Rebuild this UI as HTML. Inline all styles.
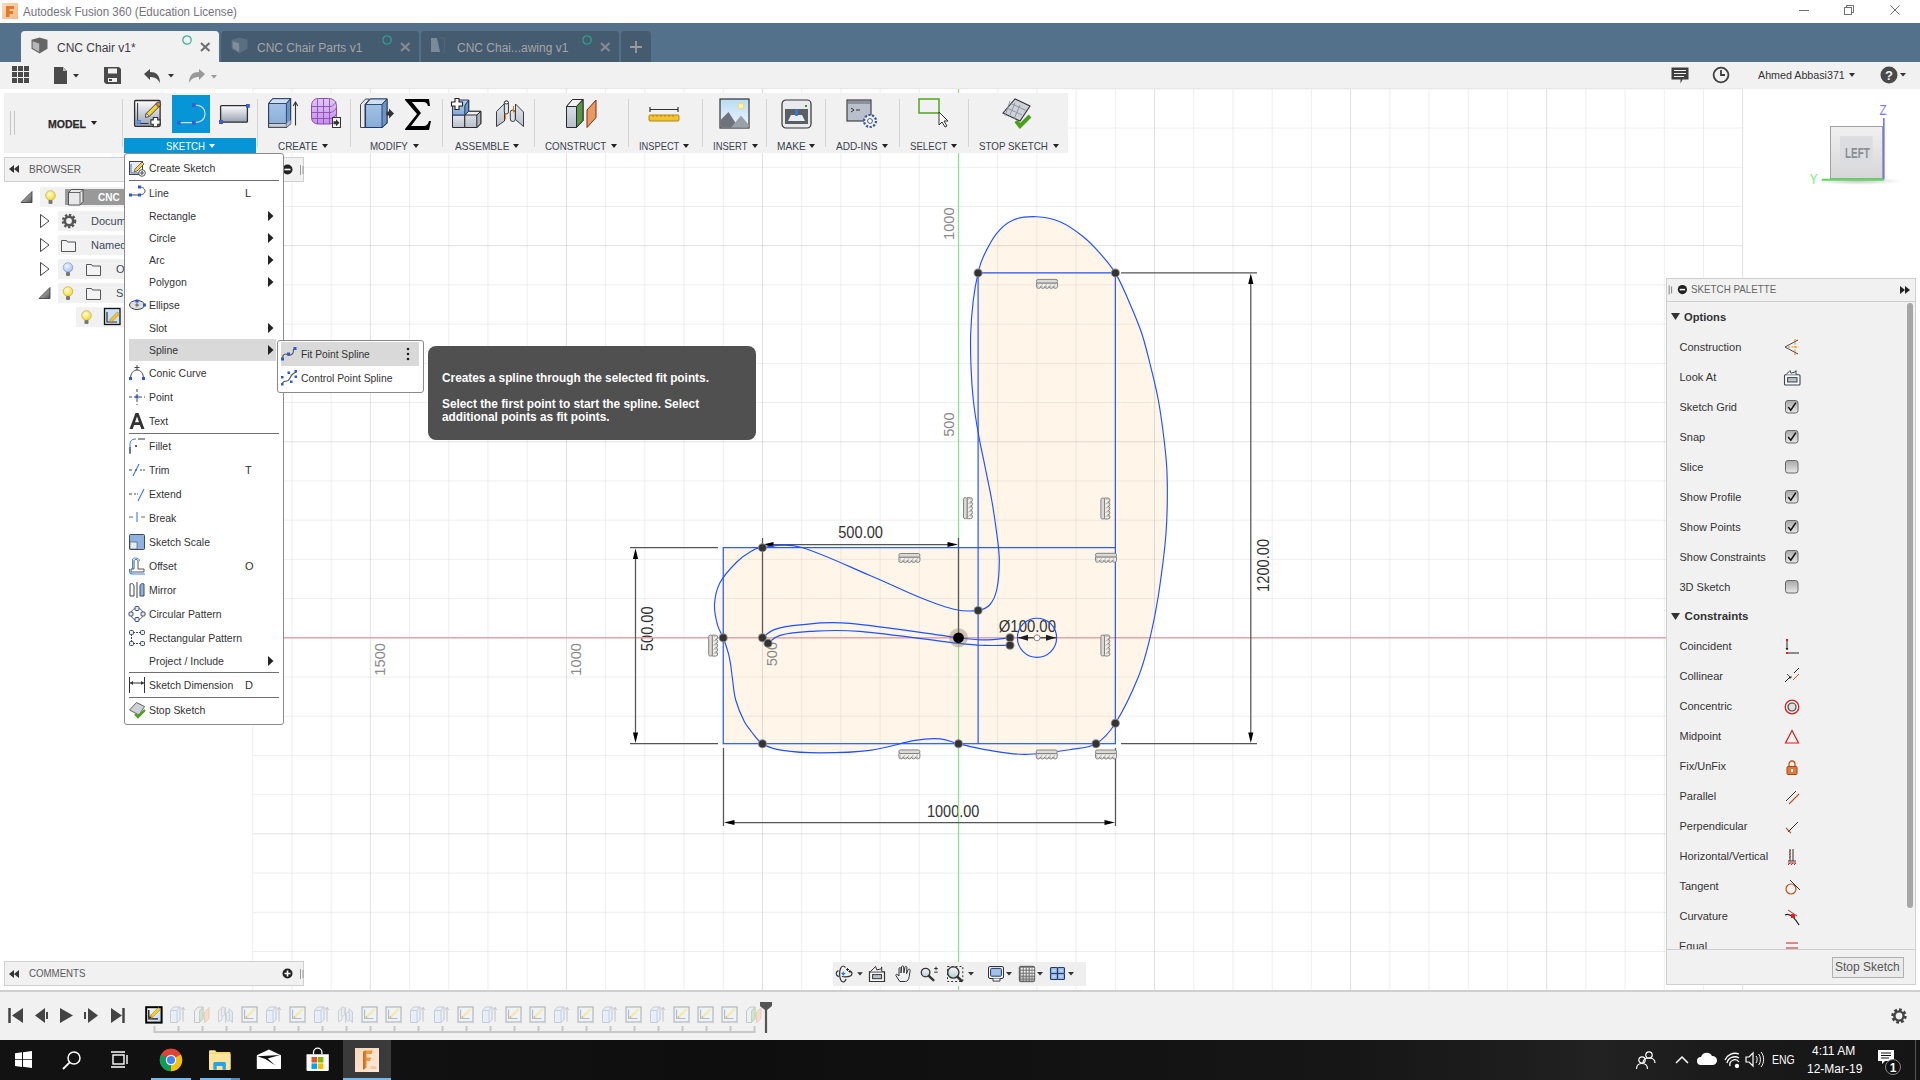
<!DOCTYPE html>
<html><head><meta charset="utf-8">
<style>
*{margin:0;padding:0;box-sizing:border-box}
html,body{width:1920px;height:1080px;overflow:hidden;background:#fff;font-family:"Liberation Sans",sans-serif;color:#3c3c3c}
.a{position:absolute}
.t{position:absolute;white-space:nowrap;line-height:1}
svg{position:absolute;overflow:visible}
</style></head><body>

<svg style="left:2px;top:3px" width="16" height="16" viewBox="0 0 16 16">
 <defs><linearGradient id="fi" x1="0" y1="0" x2="1" y2="1"><stop offset="0" stop-color="#fbd9b8"/><stop offset="1" stop-color="#f3b98a"/></linearGradient></defs>
 <rect x="0" y="0" width="16" height="16" fill="url(#fi)"/>
 <path d="M4 3h8v3H7.5v2H11v3H7.5v3H4z" fill="#e2782a"/>
</svg>
<div class="t" style="left:23.4px;top:6.14px;font-size:12px;color:#77727c;transform:scaleX(0.963);transform-origin:0 0;">Autodesk Fusion 360 (Education License)</div>
<svg style="left:1790px;top:0px" width="130" height="23" viewBox="1790 0 130 23">
 <path d="M1799 10.5h10" stroke="#707070" stroke-width="1"/>
 <rect x="1844.5" y="7.5" width="7" height="7" fill="none" stroke="#707070"/>
 <path d="M1846.5 7.5v-2h7v7h-2" fill="none" stroke="#707070"/>
 <path d="M1890.5 5.5l9 9M1899.5 5.5l-9 9" stroke="#707070" stroke-width="1"/>
</svg>
<div class="a" style="left:0;top:23px;width:1920px;height:39px;background:#53718b"></div>
<div class="a" style="left:21px;top:31px;width:198px;height:31px;background:#f1f1f1;border-radius:4px 4px 0 0"></div><svg style="left:31px;top:37px" width="17" height="16" viewBox="0 0 17 16">
<path d="M0.5 2.8l8-2.3 8 2.3v9l-8 4.7-8-4.7z" fill="#666"/>
<path d="M1.6 4.2l6.6 2.2v8.6l-6.6-3.9z" fill="#b5b6b6"/></svg><div class="t" style="left:57px;top:41.74px;font-size:12px;color:#3d3d45;">CNC Chair v1*</div><svg style="left:182px;top:35px" width="11" height="11"><circle cx="5" cy="5" r="4.2" fill="none" stroke="#3bb39c" stroke-width="1.3"/></svg><svg style="left:200px;top:42px" width="11" height="10"><path d="M1 1l8.5 8M9.5 1l-8.5 8" stroke="#707070" stroke-width="2.2"/></svg><div class="a" style="left:221px;top:31px;width:198px;height:31px;background:#455b70;border-radius:4px 4px 0 0"></div><svg style="left:231px;top:37px" width="17" height="16" viewBox="0 0 17 16">
<path d="M0.5 2.8l8-2.3 8 2.3v9l-8 4.7-8-4.7z" fill="#5b6f82"/>
<path d="M1.6 4.2l6.6 2.2v8.6l-6.6-3.9z" fill="#7e8e9c"/></svg><div class="t" style="left:257px;top:41.74px;font-size:12px;color:#a3a5a8;">CNC Chair Parts v1</div><svg style="left:382px;top:35px" width="11" height="11"><circle cx="5" cy="5" r="4.2" fill="none" stroke="#2fa08c" stroke-width="1.3"/></svg><svg style="left:400px;top:42px" width="11" height="10"><path d="M1 1l8.5 8M9.5 1l-8.5 8" stroke="#868a90" stroke-width="2.2"/></svg><div class="a" style="left:421px;top:31px;width:198px;height:31px;background:#455b70;border-radius:4px 4px 0 0"></div><svg style="left:430px;top:37px" width="16" height="16" viewBox="0 0 16 16">
<path d="M1 1h6l3 14H1z" fill="#7a8a98"/><path d="M9 1h5.5v14H12" fill="none" stroke="#536679"/></svg><div class="t" style="left:457px;top:41.74px;font-size:12px;color:#a3a5a8;">CNC Chai...awing v1</div><svg style="left:582px;top:35px" width="11" height="11"><circle cx="5" cy="5" r="4.2" fill="none" stroke="#2fa08c" stroke-width="1.3"/></svg><svg style="left:600px;top:42px" width="11" height="10"><path d="M1 1l8.5 8M9.5 1l-8.5 8" stroke="#868a90" stroke-width="2.2"/></svg><div class="a" style="left:621px;top:31px;width:30px;height:31px;background:#455b70;border-radius:4px 4px 0 0"></div>
<svg style="left:629px;top:40px" width="14" height="14"><path d="M7 1v12M1 7h12" stroke="#9a9ca0" stroke-width="1.8"/></svg>
<div class="a" style="left:0;top:62px;width:1920px;height:27px;background:#f1f1f1"></div>
<svg style="left:12px;top:66px" width="18" height="18" viewBox="0 0 18 18" fill="#4a4a4a">
<rect x="0" y="0" width="5" height="5"/><rect x="6" y="0" width="5" height="5"/><rect x="12" y="0" width="5" height="5"/>
<rect x="0" y="6" width="5" height="5"/><rect x="6" y="6" width="5" height="5"/><rect x="12" y="6" width="5" height="5"/>
<rect x="0" y="12" width="5" height="5"/><rect x="6" y="12" width="5" height="5"/><rect x="12" y="12" width="5" height="5"/></svg>
<svg style="left:54px;top:67px" width="26" height="17" viewBox="0 0 26 17">
<path d="M0 0h9l4 4v13H0z" fill="#4a4a4a"/><path d="M9 0v4h4" fill="#bbb"/><path d="M19 7h6l-3 3.5z" fill="#333"/></svg>
<svg style="left:104px;top:67px" width="17" height="17" viewBox="0 0 17 17">
<path d="M0 0h15l2 2v15H2l-2-2z" fill="#4a4a4a"/><rect x="4" y="1.5" width="9" height="5" fill="#f1f1f1"/><rect x="4" y="11" width="9" height="4" fill="#f1f1f1"/><rect x="5" y="12" width="3" height="2" fill="#4a4a4a"/></svg>
<svg style="left:144px;top:68px" width="32" height="16" viewBox="0 0 32 16">
<path d="M0 6l6-5v3c6 0 10 3 10 11-2-4-5-6-10-6v3z" fill="#4a4a4a"/><path d="M24 6h6l-3 3.5z" fill="#333"/></svg>
<svg style="left:189px;top:68px" width="30" height="16" viewBox="0 0 30 16">
<path d="M16 6l-6-5v3C4 4 0 7 0 15c2-4 5-6 10-6v3z" fill="#999"/><path d="M22 7h6l-3 3.5z" fill="#999"/></svg>
<svg style="left:1671px;top:67px" width="18" height="17" viewBox="0 0 18 17">
<path d="M0.5 0.5h17v12h-6l-2 4v-4H0.5z" fill="#3f3f3f"/><path d="M3 3.5h12M3 6.5h12M3 9.5h10" stroke="#f1f1f1" stroke-width="1.2"/></svg>
<svg style="left:1712px;top:66px" width="18" height="18" viewBox="0 0 18 18">
<circle cx="9" cy="9" r="7.4" fill="none" stroke="#3f3f3f" stroke-width="1.8"/><path d="M9 4v5h4" fill="none" stroke="#3f3f3f" stroke-width="1.8"/></svg>
<div class="t" style="left:1758px;top:69.77px;font-size:11.5px;color:#333;transform:scaleX(0.93);transform-origin:0 0;">Ahmed Abbasi371</div><svg style="left:1849px;top:73px" width="6" height="4"><path d="M0 0h6l-3.0 4z" fill="#333"/></svg>
<svg style="left:1880px;top:66px" width="28" height="18" viewBox="0 0 28 18">
<circle cx="9" cy="9" r="8.5" fill="#4a4a4a"/><text x="9" y="13.5" font-size="13" font-weight="bold" fill="#f1f1f1" text-anchor="middle" font-family="Liberation Sans">?</text>
<path d="M20 7h6l-3 3.5z" fill="#333"/></svg>
<svg style="left:0;top:0" width="1920" height="1080" viewBox="0 0 1920 1080">
<path d="M762.5 547.6C770.5 547.0 782.1 542.4 800.0 547.0C817.9 551.6 850.0 567.1 870.0 575.5C890.0 583.9 905.8 591.8 920.0 597.5C934.2 603.2 945.3 607.4 955.0 609.5C964.7 611.6 972.3 611.2 978.1 610.4C983.9 609.6 986.9 608.1 990.0 604.5C993.1 600.9 995.5 595.9 997.0 588.5C998.5 581.1 999.3 569.2 999.3 560.0C999.2 550.8 998.0 543.3 996.7 533.3C995.4 523.3 993.7 511.1 991.7 500.0C989.8 488.9 987.2 477.8 985.0 466.7C982.8 455.6 980.2 444.4 978.3 433.3C976.3 422.2 974.5 411.1 973.3 400.0C972.1 388.9 971.4 377.8 971.0 366.7C970.6 355.6 970.3 344.4 970.7 333.3C971.1 322.2 972.1 310.1 973.3 300.0C974.5 289.9 976.4 280.1 978.1 272.9C979.8 265.7 980.2 263.3 983.3 256.7C986.4 250.1 991.7 239.4 996.7 233.3C1001.7 227.2 1006.6 222.8 1013.3 220.0C1020.0 217.2 1028.9 216.4 1036.7 216.7C1044.5 217.0 1052.2 218.4 1060.0 221.7C1067.8 225.0 1076.6 231.4 1083.3 236.7C1090.0 242.0 1094.7 247.3 1100.0 253.3C1105.3 259.3 1110.6 265.1 1115.3 272.9C1120.1 280.7 1123.9 289.9 1128.3 300.0C1132.7 310.1 1138.0 322.2 1141.7 333.3C1145.4 344.4 1147.9 355.6 1150.7 366.7C1153.5 377.8 1156.2 388.9 1158.3 400.0C1160.4 411.1 1161.9 422.2 1163.3 433.3C1164.7 444.4 1166.0 455.6 1166.7 466.7C1167.4 477.8 1167.4 488.9 1167.3 500.0C1167.2 511.1 1166.7 523.3 1166.0 533.3C1165.3 543.3 1164.7 549.0 1163.3 560.0C1161.9 571.0 1160.0 586.0 1157.8 599.0C1155.6 612.0 1153.2 624.8 1150.0 637.8C1146.8 650.8 1144.2 662.5 1138.4 676.7C1132.6 691.0 1122.4 712.1 1115.3 723.3C1108.3 734.5 1103.6 739.3 1096.0 743.7C1088.4 748.1 1081.4 747.9 1069.6 749.7C1057.8 751.5 1038.3 754.3 1025.0 754.4C1011.7 754.5 1001.1 752.2 990.0 750.4C978.9 748.6 966.8 745.6 958.5 743.7C950.2 741.8 947.2 739.5 940.0 738.9C932.8 738.3 926.7 738.5 915.0 740.4C903.3 742.3 885.8 748.3 870.0 750.4C854.2 752.5 834.6 752.9 820.0 752.9C805.4 752.9 792.1 751.9 782.5 750.4C772.9 748.9 767.6 746.8 762.5 743.7C757.3 740.6 754.7 735.7 751.7 732.0C748.7 728.3 747.0 726.8 744.3 721.5C741.6 716.2 737.7 707.1 735.7 700.0C733.7 692.9 733.5 686.0 732.5 679.0C731.5 672.0 730.9 664.6 729.4 657.7C727.9 650.8 725.2 643.1 723.2 637.8C721.3 632.5 719.2 631.2 717.7 625.7C716.2 620.2 714.1 611.6 714.5 604.5C714.9 597.4 716.1 590.1 719.8 583.0C723.5 575.9 731.5 567.3 736.8 562.0C742.1 556.7 747.4 553.4 751.7 551.0C756.0 548.6 754.4 548.3 762.5 547.6Z" fill="#fff6e9"/>
<rect x="723.24" y="547.65" width="392.1" height="196.05" fill="#fff6e9"/>
<rect x="978.1" y="272.9" width="137.24" height="470.8" fill="#fff6e9"/>
</svg><svg style="left:0;top:0" width="1920" height="1080" viewBox="0 0 1920 1080">
<g font-family="Liberation Sans" fill="#333" font-size="15.6">
<text transform="translate(860.6,538) scale(0.94,1)" text-anchor="middle">500.00</text>
<text transform="translate(953.2,816.8) scale(0.93,1)" text-anchor="middle">1000.00</text>
<text transform="translate(1027.35,631.5) scale(0.955,1)" text-anchor="middle">Ø100.00</text>
<text transform="translate(652.5,628.75) rotate(-90) scale(0.94,1)" text-anchor="middle">500.00</text>
<text transform="translate(1268.9,565.4) rotate(-90) scale(0.94,1)" text-anchor="middle">1200.00</text>
</g>
<g font-family="Liberation Sans" fill="#8a8a8a" font-size="15.3">
<text transform="translate(954.3,223.7) rotate(-90) scale(0.96,1)" text-anchor="middle">1000</text>
<text transform="translate(954.3,424.6) rotate(-90) scale(0.96,1)" text-anchor="middle">500</text>
<text transform="translate(385.4,643) rotate(-90) scale(0.96,1)" text-anchor="end">1500</text>
<text transform="translate(581.1,643) rotate(-90) scale(0.96,1)" text-anchor="end">1000</text>
<text transform="translate(777.4,641.8) rotate(-90) scale(0.96,1)" text-anchor="end">500</text>
</g>
</svg><svg style="left:0;top:0" width="1920" height="1080" viewBox="0 0 1920 1080">
<path d="M252.72 89V990M291.93 89V990M331.14 89V990M409.56 89V990M448.77 89V990M487.98 89V990M527.19 89V990M605.61 89V990M644.82 89V990M684.03 89V990M723.24 89V990M801.66 89V990M840.87 89V990M880.08 89V990M919.29 89V990M997.71 89V990M1036.92 89V990M1076.13 89V990M1115.34 89V990M1193.76 89V990M1232.97 89V990M1272.18 89V990M1311.39 89V990M1389.81 89V990M1429.02 89V990M1468.23 89V990M1507.44 89V990M1585.86 89V990M1625.07 89V990M1664.28 89V990M1703.49 89V990M253 88.86H1742.5M253 128.07H1742.5M253 167.28H1742.5M253 206.49H1742.5M253 284.91H1742.5M253 324.12H1742.5M253 363.33H1742.5M253 402.54H1742.5M253 480.96H1742.5M253 520.17H1742.5M253 559.38H1742.5M253 598.59H1742.5M253 677.01H1742.5M253 716.22H1742.5M253 755.43H1742.5M253 794.64H1742.5M253 873.06H1742.5M253 912.27H1742.5M253 951.48H1742.5" stroke="rgba(0,0,0,0.065)" stroke-width="1" fill="none"/>
<path d="M370.35 89V990M566.40 89V990M762.45 89V990M958.50 89V990M1154.55 89V990M1350.60 89V990M1546.65 89V990M1742.70 89V990M253 245.70H1742.5M253 441.75H1742.5M253 637.80H1742.5M253 833.85H1742.5" stroke="rgba(0,0,0,0.12)" stroke-width="1" fill="none"/>
<path d="M958.5 89V990" stroke="#88e288" stroke-width="1.2"/>
<path d="M253 637.8H1742" stroke="#eaa5a8" stroke-width="1.4"/>
</svg><svg style="left:0;top:0" width="1920" height="1080" viewBox="0 0 1920 1080">
<g stroke="#555" stroke-width="1.25" fill="none">
<path d="M630 547.5H718M630 743.5H718M635.5 552V739"/>
<path d="M762.5 538V547M958.5 538V637M767 544.5H954"/>
<path d="M762.5 547V637"/>
<path d="M723.5 748V826M1115.5 748V826M728 822.5H1110"/>
<path d="M1121 272.9H1257M1121 743.7H1257M1250.8 278V738"/>
</g>
<g fill="#000">
<path d="M635.5 548.5l-2.6 10.5h5.2zM635.5 743l-2.6-10.5h5.2z"/>
<path d="M763 544.5l10.5-2.6v5.2zM958 544.5l-10.5-2.6v5.2z"/>
<path d="M724 822.5l10.5-2.6v5.2zM1115 822.5l-10.5-2.6v5.2z"/>
<path d="M1250.8 273.5l-2.6 10.5h5.2zM1250.8 743l-2.6-10.5h5.2z"/>
</g>
<g stroke="#1e50ff" stroke-width="1.15" fill="none">
<rect x="723.24" y="547.65" width="392.1" height="196.05"/>
<path d="M978.1 272.9V743.7M978.1 272.9H1115.34V547.65"/>
<path d="M762.5 547.6C770.5 547.0 782.1 542.4 800.0 547.0C817.9 551.6 850.0 567.1 870.0 575.5C890.0 583.9 905.8 591.8 920.0 597.5C934.2 603.2 945.3 607.4 955.0 609.5C964.7 611.6 972.3 611.2 978.1 610.4C983.9 609.6 986.9 608.1 990.0 604.5C993.1 600.9 995.5 595.9 997.0 588.5C998.5 581.1 999.3 569.2 999.3 560.0C999.2 550.8 998.0 543.3 996.7 533.3C995.4 523.3 993.7 511.1 991.7 500.0C989.8 488.9 987.2 477.8 985.0 466.7C982.8 455.6 980.2 444.4 978.3 433.3C976.3 422.2 974.5 411.1 973.3 400.0C972.1 388.9 971.4 377.8 971.0 366.7C970.6 355.6 970.3 344.4 970.7 333.3C971.1 322.2 972.1 310.1 973.3 300.0C974.5 289.9 976.4 280.1 978.1 272.9C979.8 265.7 980.2 263.3 983.3 256.7C986.4 250.1 991.7 239.4 996.7 233.3C1001.7 227.2 1006.6 222.8 1013.3 220.0C1020.0 217.2 1028.9 216.4 1036.7 216.7C1044.5 217.0 1052.2 218.4 1060.0 221.7C1067.8 225.0 1076.6 231.4 1083.3 236.7C1090.0 242.0 1094.7 247.3 1100.0 253.3C1105.3 259.3 1110.6 265.1 1115.3 272.9C1120.1 280.7 1123.9 289.9 1128.3 300.0C1132.7 310.1 1138.0 322.2 1141.7 333.3C1145.4 344.4 1147.9 355.6 1150.7 366.7C1153.5 377.8 1156.2 388.9 1158.3 400.0C1160.4 411.1 1161.9 422.2 1163.3 433.3C1164.7 444.4 1166.0 455.6 1166.7 466.7C1167.4 477.8 1167.4 488.9 1167.3 500.0C1167.2 511.1 1166.7 523.3 1166.0 533.3C1165.3 543.3 1164.7 549.0 1163.3 560.0C1161.9 571.0 1160.0 586.0 1157.8 599.0C1155.6 612.0 1153.2 624.8 1150.0 637.8C1146.8 650.8 1144.2 662.5 1138.4 676.7C1132.6 691.0 1122.4 712.1 1115.3 723.3C1108.3 734.5 1103.6 739.3 1096.0 743.7C1088.4 748.1 1081.4 747.9 1069.6 749.7C1057.8 751.5 1038.3 754.3 1025.0 754.4C1011.7 754.5 1001.1 752.2 990.0 750.4C978.9 748.6 966.8 745.6 958.5 743.7C950.2 741.8 947.2 739.5 940.0 738.9C932.8 738.3 926.7 738.5 915.0 740.4C903.3 742.3 885.8 748.3 870.0 750.4C854.2 752.5 834.6 752.9 820.0 752.9C805.4 752.9 792.1 751.9 782.5 750.4C772.9 748.9 767.6 746.8 762.5 743.7C757.3 740.6 754.7 735.7 751.7 732.0C748.7 728.3 747.0 726.8 744.3 721.5C741.6 716.2 737.7 707.1 735.7 700.0C733.7 692.9 733.5 686.0 732.5 679.0C731.5 672.0 730.9 664.6 729.4 657.7C727.9 650.8 725.2 643.1 723.2 637.8C721.3 632.5 719.2 631.2 717.7 625.7C716.2 620.2 714.1 611.6 714.5 604.5C714.9 597.4 716.1 590.1 719.8 583.0C723.5 575.9 731.5 567.3 736.8 562.0C742.1 556.7 747.4 553.4 751.7 551.0C756.0 548.6 754.4 548.3 762.5 547.6Z"/>
<path d="M762.5 637.8C764.5 636.4 768.7 631.5 775.0 629.4C781.3 627.2 787.5 625.9 800.0 624.9C812.5 623.9 823.6 621.2 850.0 623.4C876.4 625.5 936.0 635.0 958.5 637.8C981.0 640.5 976.4 639.9 985.0 639.9C993.6 639.9 1005.8 638.1 1010.0 637.8"/>
<path d="M768.0 643.3C770.0 642.0 773.0 637.4 780.0 635.4C787.0 633.4 796.7 632.1 810.0 631.4C823.3 630.7 835.2 629.4 860.0 631.4C884.8 633.4 937.7 641.1 958.5 643.4C979.3 645.7 976.4 645.1 985.0 645.4C993.6 645.7 1005.8 645.3 1010.0 645.3"/>
<circle cx="1037" cy="637.8" r="19.6"/>
</g>
<g fill="#1e1e1e"><path d="M1018 637.8l10-3v6zM1056 637.8l-10-3v6z"/></g>
<path d="M1018 637.8H1056" stroke="#1e1e1e"/>
<circle cx="1037" cy="637.8" r="3" fill="#fff" stroke="#888"/>
<g transform="translate(1036,278.9)"><path d="M0.5 4.1V7.4a2.1 2.1 0 0 0 4.2 0a2.1 2.1 0 0 0 4.2 0a2.1 2.1 0 0 0 4.2 0a2.1 2.1 0 0 0 4.2 0a2.1 2.1 0 0 0 4.2 0V4.1z" fill="#efeeeb" stroke="#858280" stroke-width="1"/><path d="M2.6 5.6a1.2 1.2 0 0 0 0 2.4M6.8 5.6a1.2 1.2 0 0 0 0 2.4M11.0 5.6a1.2 1.2 0 0 0 0 2.4M15.2 5.6a1.2 1.2 0 0 0 0 2.4M19.4 5.6a1.2 1.2 0 0 0 0 2.4" fill="none" stroke="#a8a5a0" stroke-width="0.8"/><rect x="0.5" y="0.5" width="21" height="3.6" rx="1.6" fill="#dcdad6" stroke="#858280" stroke-width="1"/></g><g transform="translate(898.4,553.0)"><path d="M0.5 4.1V7.4a2.1 2.1 0 0 0 4.2 0a2.1 2.1 0 0 0 4.2 0a2.1 2.1 0 0 0 4.2 0a2.1 2.1 0 0 0 4.2 0a2.1 2.1 0 0 0 4.2 0V4.1z" fill="#efeeeb" stroke="#858280" stroke-width="1"/><path d="M2.6 5.6a1.2 1.2 0 0 0 0 2.4M6.8 5.6a1.2 1.2 0 0 0 0 2.4M11.0 5.6a1.2 1.2 0 0 0 0 2.4M15.2 5.6a1.2 1.2 0 0 0 0 2.4M19.4 5.6a1.2 1.2 0 0 0 0 2.4" fill="none" stroke="#a8a5a0" stroke-width="0.8"/><rect x="0.5" y="0.5" width="21" height="3.6" rx="1.6" fill="#dcdad6" stroke="#858280" stroke-width="1"/></g><g transform="translate(1095,552.8000000000001)"><path d="M0.5 4.1V7.4a2.1 2.1 0 0 0 4.2 0a2.1 2.1 0 0 0 4.2 0a2.1 2.1 0 0 0 4.2 0a2.1 2.1 0 0 0 4.2 0a2.1 2.1 0 0 0 4.2 0V4.1z" fill="#efeeeb" stroke="#858280" stroke-width="1"/><path d="M2.6 5.6a1.2 1.2 0 0 0 0 2.4M6.8 5.6a1.2 1.2 0 0 0 0 2.4M11.0 5.6a1.2 1.2 0 0 0 0 2.4M15.2 5.6a1.2 1.2 0 0 0 0 2.4M19.4 5.6a1.2 1.2 0 0 0 0 2.4" fill="none" stroke="#a8a5a0" stroke-width="0.8"/><rect x="0.5" y="0.5" width="21" height="3.6" rx="1.6" fill="#dcdad6" stroke="#858280" stroke-width="1"/></g><g transform="translate(898.4,749.4000000000001)"><path d="M0.5 4.1V7.4a2.1 2.1 0 0 0 4.2 0a2.1 2.1 0 0 0 4.2 0a2.1 2.1 0 0 0 4.2 0a2.1 2.1 0 0 0 4.2 0a2.1 2.1 0 0 0 4.2 0V4.1z" fill="#efeeeb" stroke="#858280" stroke-width="1"/><path d="M2.6 5.6a1.2 1.2 0 0 0 0 2.4M6.8 5.6a1.2 1.2 0 0 0 0 2.4M11.0 5.6a1.2 1.2 0 0 0 0 2.4M15.2 5.6a1.2 1.2 0 0 0 0 2.4M19.4 5.6a1.2 1.2 0 0 0 0 2.4" fill="none" stroke="#a8a5a0" stroke-width="0.8"/><rect x="0.5" y="0.5" width="21" height="3.6" rx="1.6" fill="#dcdad6" stroke="#858280" stroke-width="1"/></g><g transform="translate(1035.7,749.5)"><path d="M0.5 4.1V7.4a2.1 2.1 0 0 0 4.2 0a2.1 2.1 0 0 0 4.2 0a2.1 2.1 0 0 0 4.2 0a2.1 2.1 0 0 0 4.2 0a2.1 2.1 0 0 0 4.2 0V4.1z" fill="#efeeeb" stroke="#858280" stroke-width="1"/><path d="M2.6 5.6a1.2 1.2 0 0 0 0 2.4M6.8 5.6a1.2 1.2 0 0 0 0 2.4M11.0 5.6a1.2 1.2 0 0 0 0 2.4M15.2 5.6a1.2 1.2 0 0 0 0 2.4M19.4 5.6a1.2 1.2 0 0 0 0 2.4" fill="none" stroke="#a8a5a0" stroke-width="0.8"/><rect x="0.5" y="0.5" width="21" height="3.6" rx="1.6" fill="#dcdad6" stroke="#858280" stroke-width="1"/></g><g transform="translate(1095,749.5)"><path d="M0.5 4.1V7.4a2.1 2.1 0 0 0 4.2 0a2.1 2.1 0 0 0 4.2 0a2.1 2.1 0 0 0 4.2 0a2.1 2.1 0 0 0 4.2 0a2.1 2.1 0 0 0 4.2 0V4.1z" fill="#efeeeb" stroke="#858280" stroke-width="1"/><path d="M2.6 5.6a1.2 1.2 0 0 0 0 2.4M6.8 5.6a1.2 1.2 0 0 0 0 2.4M11.0 5.6a1.2 1.2 0 0 0 0 2.4M15.2 5.6a1.2 1.2 0 0 0 0 2.4M19.4 5.6a1.2 1.2 0 0 0 0 2.4" fill="none" stroke="#a8a5a0" stroke-width="0.8"/><rect x="0.5" y="0.5" width="21" height="3.6" rx="1.6" fill="#dcdad6" stroke="#858280" stroke-width="1"/></g>
<g transform="translate(963.0,497.2) matrix(0,1,1,0,0,0)"><path d="M0.5 4.1V7.4a2.1 2.1 0 0 0 4.2 0a2.1 2.1 0 0 0 4.2 0a2.1 2.1 0 0 0 4.2 0a2.1 2.1 0 0 0 4.2 0a2.1 2.1 0 0 0 4.2 0V4.1z" fill="#efeeeb" stroke="#858280" stroke-width="1"/><path d="M2.6 5.6a1.2 1.2 0 0 0 0 2.4M6.8 5.6a1.2 1.2 0 0 0 0 2.4M11.0 5.6a1.2 1.2 0 0 0 0 2.4M15.2 5.6a1.2 1.2 0 0 0 0 2.4M19.4 5.6a1.2 1.2 0 0 0 0 2.4" fill="none" stroke="#a8a5a0" stroke-width="0.8"/><rect x="0.5" y="0.5" width="21" height="3.6" rx="1.6" fill="#dcdad6" stroke="#858280" stroke-width="1"/></g><g transform="translate(1100.4,497.5) matrix(0,1,1,0,0,0)"><path d="M0.5 4.1V7.4a2.1 2.1 0 0 0 4.2 0a2.1 2.1 0 0 0 4.2 0a2.1 2.1 0 0 0 4.2 0a2.1 2.1 0 0 0 4.2 0a2.1 2.1 0 0 0 4.2 0V4.1z" fill="#efeeeb" stroke="#858280" stroke-width="1"/><path d="M2.6 5.6a1.2 1.2 0 0 0 0 2.4M6.8 5.6a1.2 1.2 0 0 0 0 2.4M11.0 5.6a1.2 1.2 0 0 0 0 2.4M15.2 5.6a1.2 1.2 0 0 0 0 2.4M19.4 5.6a1.2 1.2 0 0 0 0 2.4" fill="none" stroke="#a8a5a0" stroke-width="0.8"/><rect x="0.5" y="0.5" width="21" height="3.6" rx="1.6" fill="#dcdad6" stroke="#858280" stroke-width="1"/></g><g transform="translate(708.2,634.6) matrix(0,1,1,0,0,0)"><path d="M0.5 4.1V7.4a2.1 2.1 0 0 0 4.2 0a2.1 2.1 0 0 0 4.2 0a2.1 2.1 0 0 0 4.2 0a2.1 2.1 0 0 0 4.2 0a2.1 2.1 0 0 0 4.2 0V4.1z" fill="#efeeeb" stroke="#858280" stroke-width="1"/><path d="M2.6 5.6a1.2 1.2 0 0 0 0 2.4M6.8 5.6a1.2 1.2 0 0 0 0 2.4M11.0 5.6a1.2 1.2 0 0 0 0 2.4M15.2 5.6a1.2 1.2 0 0 0 0 2.4M19.4 5.6a1.2 1.2 0 0 0 0 2.4" fill="none" stroke="#a8a5a0" stroke-width="0.8"/><rect x="0.5" y="0.5" width="21" height="3.6" rx="1.6" fill="#dcdad6" stroke="#858280" stroke-width="1"/></g><g transform="translate(1100.4,634.5) matrix(0,1,1,0,0,0)"><path d="M0.5 4.1V7.4a2.1 2.1 0 0 0 4.2 0a2.1 2.1 0 0 0 4.2 0a2.1 2.1 0 0 0 4.2 0a2.1 2.1 0 0 0 4.2 0a2.1 2.1 0 0 0 4.2 0V4.1z" fill="#efeeeb" stroke="#858280" stroke-width="1"/><path d="M2.6 5.6a1.2 1.2 0 0 0 0 2.4M6.8 5.6a1.2 1.2 0 0 0 0 2.4M11.0 5.6a1.2 1.2 0 0 0 0 2.4M15.2 5.6a1.2 1.2 0 0 0 0 2.4M19.4 5.6a1.2 1.2 0 0 0 0 2.4" fill="none" stroke="#a8a5a0" stroke-width="0.8"/><rect x="0.5" y="0.5" width="21" height="3.6" rx="1.6" fill="#dcdad6" stroke="#858280" stroke-width="1"/></g>
<circle cx="978.1" cy="272.9" r="4.5" fill="#8a8a8a"/><circle cx="978.1" cy="272.9" r="3.5" fill="#333"/>
<circle cx="1115.4" cy="272.9" r="4.5" fill="#8a8a8a"/><circle cx="1115.4" cy="272.9" r="3.5" fill="#333"/>
<circle cx="978.1" cy="610.4" r="4.5" fill="#8a8a8a"/><circle cx="978.1" cy="610.4" r="3.5" fill="#333"/>
<circle cx="762.45" cy="547.65" r="4.5" fill="#8a8a8a"/><circle cx="762.45" cy="547.65" r="3.5" fill="#333"/>
<circle cx="723.24" cy="637.8" r="4.5" fill="#8a8a8a"/><circle cx="723.24" cy="637.8" r="3.5" fill="#333"/>
<circle cx="762.45" cy="637.8" r="4.5" fill="#8a8a8a"/><circle cx="762.45" cy="637.8" r="3.5" fill="#333"/>
<circle cx="768" cy="643.3" r="4.5" fill="#8a8a8a"/><circle cx="768" cy="643.3" r="3.5" fill="#333"/>
<circle cx="1010" cy="637.8" r="4.5" fill="#8a8a8a"/><circle cx="1010" cy="637.8" r="3.5" fill="#333"/>
<circle cx="1010" cy="645.3" r="4.5" fill="#8a8a8a"/><circle cx="1010" cy="645.3" r="3.5" fill="#333"/>
<circle cx="1115.34" cy="723.3" r="4.5" fill="#8a8a8a"/><circle cx="1115.34" cy="723.3" r="3.5" fill="#333"/>
<circle cx="1096" cy="743.7" r="4.5" fill="#8a8a8a"/><circle cx="1096" cy="743.7" r="3.5" fill="#333"/>
<circle cx="958.5" cy="743.7" r="4.5" fill="#8a8a8a"/><circle cx="958.5" cy="743.7" r="3.5" fill="#333"/>
<circle cx="762.45" cy="743.7" r="4.5" fill="#8a8a8a"/><circle cx="762.45" cy="743.7" r="3.5" fill="#333"/>
<circle cx="958.5" cy="637.8" r="9.5" fill="rgba(130,115,100,0.38)"/><circle cx="958.5" cy="637.8" r="5.4" fill="#000"/>
</svg>
<div class="a" style="left:4px;top:93px;width:1064px;height:60px;background:#f1f1f1"></div>
<div class="a" style="left:10px;top:111px;width:1px;height:24px;background:#c4c4c4"></div>
<div class="a" style="left:14px;top:111px;width:1px;height:24px;background:#c4c4c4"></div>
<div class="a" style="left:124px;top:138px;width:132px;height:15px;background:#0696d7"></div>
<div class="a" style="left:172px;top:95px;width:38px;height:38px;background:#0696d7"></div>
<div class="t" style="left:48.4px;top:118.59px;font-size:11px;color:#2a2a2a;transform:scaleX(0.956);transform-origin:0 0;font-weight:600;-webkit-text-stroke:0.25px #2a2a2a;">MODEL</div><svg style="left:91px;top:121px" width="6" height="4"><path d="M0 0h6l-3.0 4z" fill="#222"/></svg><div class="a" style="left:122px;top:99px;width:1px;height:48px;background:#d4d4d6"></div><div class="a" style="left:257px;top:99px;width:1px;height:48px;background:#d4d4d6"></div><div class="a" style="left:350px;top:99px;width:1px;height:48px;background:#d4d4d6"></div><div class="a" style="left:442px;top:99px;width:1px;height:48px;background:#d4d4d6"></div><div class="a" style="left:534px;top:99px;width:1px;height:48px;background:#d4d4d6"></div><div class="a" style="left:628px;top:99px;width:1px;height:48px;background:#d4d4d6"></div><div class="a" style="left:702px;top:99px;width:1px;height:48px;background:#d4d4d6"></div><div class="a" style="left:766px;top:99px;width:1px;height:48px;background:#d4d4d6"></div><div class="a" style="left:825px;top:99px;width:1px;height:48px;background:#d4d4d6"></div><div class="a" style="left:899px;top:99px;width:1px;height:48px;background:#d4d4d6"></div><div class="a" style="left:968px;top:99px;width:1px;height:48px;background:#d4d4d6"></div><div class="t" style="left:165.5px;top:141.29px;font-size:11px;color:#fff;transform:scaleX(0.8740475123263112);transform-origin:0 0;">SKETCH</div><svg style="left:208.5px;top:144px" width="6" height="4"><path d="M0 0h6l-3.0 4z" fill="#fff"/></svg><div class="t" style="left:278px;top:141.29px;font-size:11px;color:#3a4250;transform:scaleX(0.9018264840182649);transform-origin:0 0;">CREATE</div><svg style="left:321.6px;top:144px" width="6" height="4"><path d="M0 0h6l-3.0 4z" fill="#222"/></svg><div class="t" style="left:370.3px;top:141.29px;font-size:11px;color:#3a4250;transform:scaleX(0.8835904628330995);transform-origin:0 0;">MODIFY</div><svg style="left:412.5px;top:144px" width="6" height="4"><path d="M0 0h6l-3.0 4z" fill="#222"/></svg><div class="t" style="left:455px;top:141.29px;font-size:11px;color:#3a4250;transform:scaleX(0.9173693086003373);transform-origin:0 0;">ASSEMBLE</div><svg style="left:513px;top:144px" width="6" height="4"><path d="M0 0h6l-3.0 4z" fill="#222"/></svg><div class="t" style="left:545.3px;top:141.29px;font-size:11px;color:#3a4250;transform:scaleX(0.887762490948588);transform-origin:0 0;">CONSTRUCT</div><svg style="left:610.5px;top:144px" width="6" height="4"><path d="M0 0h6l-3.0 4z" fill="#222"/></svg><div class="t" style="left:639.4px;top:141.29px;font-size:11px;color:#3a4250;transform:scaleX(0.8453954268932241);transform-origin:0 0;">INSPECT</div><svg style="left:683px;top:144px" width="6" height="4"><path d="M0 0h6l-3.0 4z" fill="#222"/></svg><div class="t" style="left:713px;top:141.29px;font-size:11px;color:#3a4250;transform:scaleX(0.85949177877429);transform-origin:0 0;">INSERT</div><svg style="left:752px;top:144px" width="6" height="4"><path d="M0 0h6l-3.0 4z" fill="#222"/></svg><div class="t" style="left:777px;top:141.29px;font-size:11px;color:#3a4250;transform:scaleX(0.9239653512993262);transform-origin:0 0;">MAKE</div><svg style="left:809px;top:144px" width="6" height="4"><path d="M0 0h6l-3.0 4z" fill="#222"/></svg><div class="t" style="left:836.4px;top:141.29px;font-size:11px;color:#3a4250;transform:scaleX(0.9155241043785936);transform-origin:0 0;">ADD-INS</div><svg style="left:882px;top:144px" width="6" height="4"><path d="M0 0h6l-3.0 4z" fill="#222"/></svg><div class="t" style="left:910.3px;top:141.29px;font-size:11px;color:#3a4250;transform:scaleX(0.8763729843421361);transform-origin:0 0;">SELECT</div><svg style="left:951px;top:144px" width="6" height="4"><path d="M0 0h6l-3.0 4z" fill="#222"/></svg><div class="t" style="left:979px;top:141.29px;font-size:11px;color:#3a4250;transform:scaleX(0.8912425729785585);transform-origin:0 0;">STOP SKETCH</div><svg style="left:1053px;top:144px" width="6" height="4"><path d="M0 0h6l-3.0 4z" fill="#222"/></svg>
<!-- create sketch icon + line + rect -->
<svg style="left:125px;top:93px" width="135" height="44" viewBox="125 93 135 44">
<defs><linearGradient id="gs" x1="0" y1="0" x2="0" y2="1"><stop offset="0" stop-color="#fdfdfd"/><stop offset="1" stop-color="#97a0b4"/></linearGradient></defs>
<rect x="134.6" y="100.5" width="25.5" height="25.8" rx="1" fill="url(#gs)" stroke="#2e2e2e" stroke-width="1.3"/>
<path d="M137.6 103v20.5h11" fill="none" stroke="#333" stroke-width="1"/>
<rect x="137" y="120.3" width="3.6" height="3.6" fill="#5a9af0" stroke="#3a6ad0" stroke-width="0.6"/>
<path d="M146.3 113.4l10.8-10.8 3 3-10.8 10.8-3.8 0.8z" fill="#f4d23a" stroke="#333" stroke-width="0.9"/>
<path d="M155.6 104.1l1.5-1.5a1.5 1.5 0 0 1 2.2 0l0.8 0.8a1.5 1.5 0 0 1 0 2.2l-1.5 1.5z" fill="#c8844a" stroke="#333" stroke-width="0.8"/>
<path d="M146.3 113.4l3 3-3.8 0.8z" fill="#fff" stroke="#333" stroke-width="0.7"/>
<path d="M153.3 117.5h4.4v2.4h2.4v4.4h-2.4v2.4h-4.4v-2.4h-2.4v-4.4h2.4z" fill="#fff" stroke="#2e2e2e" stroke-width="1.1"/>
<path d="M180 122.6H193M193.5 105c7 0 11.5 3 11.5 8.8s-4.5 8.8-11.5 8.8" fill="none" stroke="#d6dde2" stroke-width="1.1"/>
<rect x="177" y="120.8" width="3.8" height="3.8" fill="#3d5cd0"/><rect x="192" y="120.8" width="3.8" height="3.8" fill="#3d5cd0"/><rect x="192" y="103.3" width="3.8" height="3.8" fill="#3d5cd0"/>
<defs><linearGradient id="gr" x1="0" y1="0" x2="0" y2="1"><stop offset="0" stop-color="#fdfdfd"/><stop offset="1" stop-color="#98a0b2"/></linearGradient></defs>
<rect x="220.6" y="105.6" width="26.8" height="16.6" rx="1" fill="url(#gr)" stroke="#2e2e2e" stroke-width="1.3"/>
<rect x="219" y="120" width="4" height="4" fill="#3d5cd0"/><rect x="246" y="104" width="3.8" height="3.8" fill="#3d5cd0"/>
</svg>
<!-- extrude -->
<svg style="left:260px;top:93px" width="40" height="40" viewBox="260 93 40 40">
<defs><linearGradient id="gex" x1="0" y1="0" x2="0" y2="1"><stop offset="0" stop-color="#a9c7e8"/><stop offset="1" stop-color="#88acd8"/></linearGradient></defs>
<path d="M268.6 103.5l4.2-4.8h17.8v25l-4.2 3.6h-17.8z" fill="url(#gex)" stroke="#243a66" stroke-width="1.1"/>
<path d="M268.6 103.5l4.2-4.8h17.8l-4.2 4.8z" fill="#cfe0f2" stroke="#243a66" stroke-width="0.9"/>
<path d="M286.4 103.5l4.2-4.8v25l-4.2 3.6z" fill="#6f93c3" stroke="#243a66" stroke-width="0.9"/>
<path d="M268.6 123.5h17.8v3.8h-17.8z" fill="#c9ced8" stroke="#333" stroke-width="0.8"/>
<path d="M286.4 123.5l4.2-3.6v3.8l-4.2 3.6z" fill="#b8bec8"/>
<path d="M295.5 125.5V102.5M293.2 106l2.3-4 2.3 4" fill="none" stroke="#333" stroke-width="1.1"/>
</svg>
<!-- form -->
<svg style="left:305px;top:93px" width="40" height="40" viewBox="305 93 40 40">
<defs><linearGradient id="gfm" x1="0" y1="0" x2="0" y2="1"><stop offset="0" stop-color="#e2c8f4"/><stop offset="1" stop-color="#c58ee8"/></linearGradient></defs>
<path d="M311.5 106c0-4 2-7.5 7-7.5h10c5 0 8 3 8 8v10c0 5-3 7.5-7.5 7.5h-10.5c-4.5 0-7-2.5-7-7z" fill="url(#gfm)" stroke="#8a4cb8" stroke-width="1"/>
<path d="M311.5 106.5h19.5M312 112.5h19M312 118.5h19M317.5 99v25M323.5 98.5v25.5M329.5 99v25M331 106.5c2.5-1 4.5-3 5-5M331 112.5c2.5-1 5-3 5.5-5M331 118.5c2.5-1 5-3 5.5-5" fill="none" stroke="#8a4cb8" stroke-width="0.9"/>
<rect x="332.5" y="117.5" width="8" height="10" fill="#f4f4f4" stroke="#333" stroke-width="1"/>
<path d="M333.5 121.3h2.5v-2l3.5 3.5-3.5 3.5v-2h-2.5z" fill="#333"/>
</svg>
<!-- modify press pull -->
<svg style="left:355px;top:93px" width="40" height="40" viewBox="355 93 40 40">
<defs><linearGradient id="gpp" x1="0" y1="0" x2="0" y2="1"><stop offset="0" stop-color="#a9c7e8"/><stop offset="1" stop-color="#88acd8"/></linearGradient></defs>
<path d="M360.5 104.5l5-5.5h4l-4.5 5.5v23h-4.5z" fill="#e8eaee" stroke="#333" stroke-width="0.9"/>
<path d="M365.5 104.5l5-5.5h16.5v24l-5 4.5h-16.5z" fill="url(#gpp)" stroke="#243a66" stroke-width="1.1"/>
<path d="M365.5 104.5l5-5.5h16.5l-5 5.5z" fill="#cfe0f2" stroke="#243a66" stroke-width="0.9"/>
<path d="M382 104.5l5-5.5v24l-5 4.5z" fill="#6f93c3" stroke="#243a66" stroke-width="0.9"/>
<path d="M386.5 111.5h2.5v-3l5 5-5 5v-3h-2.5z" fill="#333"/>
</svg>
<!-- sigma -->
<svg style="left:404px;top:98px" width="28" height="32" viewBox="0 0 28 32">
<path d="M1 1h24l1 7h-2c-1-3-2-4-5-4H8l9 11-10 13h12c3 0 5-1 6-5h2l-2 9H1v-1l12-15L1 2z" fill="#000"/>
</svg>
<!-- assemble new component + joint + construct -->
<svg style="left:440px;top:93px" width="180" height="40" viewBox="440 93 180 40">
<defs><linearGradient id="gcb" x1="0" y1="0" x2="0" y2="1"><stop offset="0" stop-color="#e4e7ec"/><stop offset="1" stop-color="#b9c0cc"/></linearGradient>
<linearGradient id="gbl" x1="0" y1="0" x2="0" y2="1"><stop offset="0" stop-color="#b5d0ee"/><stop offset="1" stop-color="#84a8d6"/></linearGradient></defs>
<g stroke="#2a2a2a" stroke-width="1">
<path d="M452.5 115h12.3v12.5h-12.3z" fill="url(#gcb)"/>
<path d="M464.8 115l3.8-3.7h12.2v12.4l-3.8 3.8h-12.2z" fill="url(#gcb)"/>
<path d="M464.8 115l3.8-3.7h12.2l-3.8 3.7z" fill="#eceef2"/>
<path d="M476.8 115l4-3.7v12.4l-4 3.8z" fill="#aab2be"/>
<path d="M452.5 105.5l4-5.5h12.2v11.3l-3.9 3.7h-12.3z" fill="url(#gbl)" stroke="#243a66"/>
<path d="M464.8 105.5l3.9-5.5v11.3l-3.9 3.7z" fill="#6f93c3" stroke="#243a66"/>
</g>
<path d="M455 98.5h4v3.5h3.5v4h-3.5v3.5h-4v-3.5h-3.5v-4h3.5z" fill="#fff" stroke="#222" stroke-width="1.1"/>
<g stroke="#2a2a2a" stroke-width="0.9">
<path d="M496.5 111.5l8-8v17.5l-8 5.5z" fill="url(#gcb)"/>
<rect x="504.3" y="101" width="4.2" height="13" rx="2.1" fill="#dfe3e8"/>
<ellipse cx="506.4" cy="102.5" rx="2.1" ry="1.4" fill="#fff"/>
<path d="M515.5 104l8 8v14.5l-8-7z" fill="url(#gcb)"/>
<rect x="510.3" y="110" width="5" height="11.5" rx="2.5" fill="#dfe3e8"/>
</g>
<path d="M505.6 113v6.5M513.5 106v6.5" stroke="#f07010" stroke-width="1"/>
<g stroke="#2a2a2a" stroke-width="1">
<path d="M566.5 106.5l6-7h10.5v21l-6.5 7h-10z" fill="url(#gcb)"/>
<path d="M566.5 106.5l6-7h10.5l-6.5 7z" fill="#f2f3f5"/>
<path d="M576.5 106.5l6.5-7v21l-6.5 7z" fill="#5a9648"/>
<path d="M587 110l9-10v17.5l-9 10z" fill="#e89a62" stroke="#7a3010"/>
</g>
</svg>
<!-- inspect -->
<svg style="left:648px;top:104px" width="32" height="20" viewBox="0 0 32 20">
<path d="M2 3v5M30 3v5M2 5.5h28" fill="none" stroke="#333" stroke-width="1.2"/>
<rect x="1" y="11" width="30" height="6" rx="1" fill="#f2c230" stroke="#b5870a"/>
<path d="M5 11v2M9 11v2M13 11v2M17 11v2M21 11v2M25 11v2" stroke="#a07a10" stroke-width="0.8"/>
</svg>
<!-- insert -->
<svg style="left:719px;top:98px" width="30" height="30" viewBox="0 0 30 30">
<defs><linearGradient id="gsky" x1="0" y1="0" x2="0" y2="1"><stop offset="0" stop-color="#b9dcf6"/><stop offset="1" stop-color="#eef6fc"/></linearGradient></defs>
<rect x="1" y="1" width="29" height="29" fill="url(#gsky)" stroke="#333" stroke-width="1.2"/>
<circle cx="22" cy="8" r="3" fill="#fff4b0" stroke="#f5d860"/>
<path d="M1.5 29.5V22l8-8 10 15.5z" fill="#6d727c"/><path d="M12 29.5l10-12 7.5 9v3z" fill="#9aa0a8"/>
</svg>
<!-- make -->
<svg style="left:781px;top:99px" width="30" height="30" viewBox="0 0 30 30">
<rect x="1" y="1" width="29" height="28" rx="4" fill="#e8eaee" stroke="#333" stroke-width="1.2"/>
<rect x="4" y="10" width="23" height="15" fill="#5a5f66"/><path d="M7 22l3-6h11l3 6z" fill="#e8eef4"/>
<path d="M15.5 10v7" stroke="#3a78d0" stroke-width="2.5"/><rect x="24" y="6" width="2" height="2" fill="#2a9a2a"/>
</svg>
<!-- add-ins -->
<svg style="left:846px;top:98px" width="32" height="32" viewBox="0 0 32 32">
<rect x="1" y="2" width="24" height="21" fill="#b9c0cc" stroke="#333" stroke-width="1.1"/><rect x="2" y="3" width="22" height="3" fill="#8a929e"/>
<path d="M5 10l3 2-3 2M10 12h4" fill="none" stroke="#333"/>
<circle cx="24" cy="23" r="6" fill="#f1f1f1" stroke="#3a5a9a" stroke-width="2.2" stroke-dasharray="2.2 1.5"/><circle cx="24" cy="23" r="2.4" fill="#fff" stroke="#3a5a9a"/>
</svg>
<!-- select -->
<svg style="left:918px;top:98px" width="32" height="32" viewBox="0 0 32 32">
<rect x="1" y="1" width="20" height="14" fill="none" stroke="#5aaa2a" stroke-width="1.6"/>
<path d="M21 14v13l3-3 3 5 2-1-3-5h4z" fill="#fff" stroke="#333"/>
</svg>
<!-- stop sketch -->
<svg style="left:1002px;top:98px" width="32" height="32" viewBox="0 0 32 32">
<path d="M1 15l12-14 15 7-10 15z" fill="#cdd2da" stroke="#333" stroke-width="1.1"/>
<path d="M5 10l15 7M9 5.5l15 7M8 3l-5 15M13 5l-6 14M18 7l-6 14" stroke="#8a8f98" stroke-width="0.9"/>
<path d="M14 23l4 5 10-10" fill="none" stroke="#4aa01a" stroke-width="4"/>
</svg>

<div class="a" style="left:4px;top:157px;width:300px;height:25px;background:#f1f1f1;border:1px solid #d0d0d0"></div>
<svg style="left:9px;top:165px" width="11" height="8"><path d="M0 4l5-4v8zM5 4l5-4v8z" fill="#333"/></svg>
<svg style="left:282px;top:164px" width="22" height="12"><circle cx="5.5" cy="5.5" r="5" fill="#222"/><path d="M2.5 5.5h6" stroke="#fff" stroke-width="1.6"/><path d="M18.5 1v10M21 2v8" stroke="#888" stroke-width="0.8"/></svg>
<div class="a" style="left:40px;top:187px;width:90px;height:20px;background:#f1f1f1"></div>
<div class="a" style="left:65px;top:189px;width:65px;height:16px;background:#999"></div>
<div class="a" style="left:58px;top:211px;width:72px;height:20px;background:#f1f1f1"></div>
<div class="a" style="left:58px;top:235px;width:72px;height:20px;background:#f1f1f1"></div>
<div class="a" style="left:58px;top:259px;width:72px;height:20px;background:#f1f1f1"></div>
<div class="a" style="left:58px;top:283px;width:72px;height:20px;background:#f1f1f1"></div>
<div class="a" style="left:76px;top:307px;width:54px;height:20px;background:#f1f1f1"></div>
<div class="t" style="left:29px;top:163.89px;font-size:11px;color:#5a5a5a;transform:scaleX(0.915);transform-origin:0 0;">BROWSER</div><div class="t" style="left:98px;top:193.34px;font-size:10px;color:#fff;font-weight:bold;">CNC</div><div class="t" style="left:91px;top:216.49px;font-size:11px;color:#3a4a5a;">Docum</div><div class="t" style="left:91px;top:240.49px;font-size:11px;color:#3a4a5a;">Named</div><div class="t" style="left:116px;top:264.29px;font-size:11px;color:#3a4a5a;">O</div><div class="t" style="left:116px;top:288.29px;font-size:11px;color:#3a4a5a;">S</div>
<svg style="left:0;top:0" width="140" height="340" viewBox="0 0 140 340">
 <defs><linearGradient id="trg" x1="0" y1="0" x2="1" y2="1"><stop offset="0" stop-color="#ddd"/><stop offset="1" stop-color="#555"/></linearGradient>
 <radialGradient id="bulb" cx="0.4" cy="0.35" r="0.7"><stop offset="0" stop-color="#fffbd0"/><stop offset="1" stop-color="#f0d830"/></radialGradient>
 <radialGradient id="bulbb" cx="0.4" cy="0.35" r="0.7"><stop offset="0" stop-color="#f4f8ff"/><stop offset="1" stop-color="#9ab8f0"/></radialGradient></defs>
 <path d="M21 202.5l11-11v11z" fill="url(#trg)" stroke="#333" stroke-width="0.8"/>
 <path d="M40.5 214.5l8.5 6.5-8.5 6.5z" fill="#fff" stroke="#333" stroke-width="0.9"/>
 <path d="M40.5 238.5l8.5 6.5-8.5 6.5z" fill="#fff" stroke="#333" stroke-width="0.9"/>
 <path d="M40.5 262.5l8.5 6.5-8.5 6.5z" fill="#fff" stroke="#333" stroke-width="0.9"/>
 <path d="M39 298.5l11-11v11z" fill="url(#trg)" stroke="#333" stroke-width="0.8"/>
 <g stroke="#b8a020" stroke-width="0.6"><circle cx="50.5" cy="195.5" r="4.8" fill="url(#bulb)"/><circle cx="68" cy="291.5" r="4.8" fill="url(#bulb)"/><circle cx="86.5" cy="315.5" r="4.8" fill="url(#bulb)"/></g>
 <circle cx="68" cy="267.5" r="4.8" fill="url(#bulbb)" stroke="#7090c0" stroke-width="0.6"/>
 <g fill="#777"><rect x="48.5" y="200" width="4" height="4" rx="1"/><rect x="66" y="296" width="4" height="4" rx="1"/><rect x="84.5" y="320" width="4" height="4" rx="1"/><rect x="66" y="272" width="4" height="4" rx="1"/></g>
 <path d="M68.5 192.5l3-3h11.5v12l-3 3.5H68.5z" fill="#e8e8ea" stroke="#444" stroke-width="0.9"/><path d="M68.5 192.5h11.5v12M80 192.5l3-3" fill="none" stroke="#444" stroke-width="0.8"/>
 <circle cx="69" cy="221" r="5.8" fill="none" stroke="#555" stroke-width="3" stroke-dasharray="2.2 1.6"/><circle cx="69" cy="221" r="4.2" fill="none" stroke="#555" stroke-width="2.6"/>
 <g fill="#f4f4f6" stroke="#444" stroke-width="0.9"><path d="M61.5 240.5h5l1 1.5h8v9.5h-14z"/><path d="M86.5 264.5h5l1 1.5h8v9.5h-14z"/><path d="M86.5 288.5h5l1 1.5h8v9.5h-14z"/></g>
 <rect x="104.5" y="308.5" width="15.5" height="16" fill="#cfe0f5" stroke="#111" stroke-width="1.3"/>
 <path d="M107 312v10h10" fill="none" stroke="#333" stroke-width="1.2"/><path d="M109.5 320l8-8 2 2-8 8z" fill="#f3c52a" stroke="#a07a10" stroke-width="0.5"/>
</svg>

<svg style="left:1800px;top:95px" width="110" height="100" viewBox="0 0 110 100">
 <defs><linearGradient id="vc" x1="0" y1="0" x2="0" y2="1"><stop offset="0" stop-color="#f1f1f1"/><stop offset="1" stop-color="#d6d6d6"/></linearGradient>
 <radialGradient id="vsh" cx="0.5" cy="0.5" r="0.5"><stop offset="0" stop-color="rgba(0,0,0,0.22)"/><stop offset="1" stop-color="rgba(0,0,0,0)"/></radialGradient></defs>
 <ellipse cx="58" cy="86" rx="44" ry="4" fill="url(#vsh)"/>
 <rect x="30.5" y="31.5" width="52" height="52" fill="url(#vc)" stroke="#a0a0a0"/>
 <rect x="40" y="41.2" width="32.7" height="32.4" fill="#dcdde0"/>
 <text x="0" y="0" font-family="Liberation Sans" font-size="15" font-weight="bold" fill="#8a8d92" transform="translate(45,63.2) scale(0.66,1)">LEFT</text>
 <path d="M83.8 23V84.5" stroke="#7070ff" stroke-width="1.6"/>
 <path d="M21.8 84.7H84" stroke="#55dd55" stroke-width="2"/>
 <text x="0" y="0" font-family="Liberation Sans" font-size="14.5" fill="#7a7aff" transform="translate(79.4,20) scale(0.8,1)">Z</text>
 <text x="0" y="0" font-family="Liberation Sans" font-size="14.5" fill="#77e877" transform="translate(9.8,89.4) scale(0.8,1)">Y</text>
</svg>

<svg style="left:0;top:0;width:0;height:0"><defs><linearGradient id="cbg" x1="0" y1="0" x2="0" y2="1"><stop offset="0" stop-color="#a8a8a8"/><stop offset="1" stop-color="#e8e8e8"/></linearGradient></defs></svg>
<div class="a" style="left:1666px;top:278px;width:250px;height:707px;background:#f1f1f1;border:1px solid #cfcfcf"></div>
<div class="a" style="left:1667px;top:301px;width:248px;height:1px;background:#cfcfcf"></div>
<div class="a" style="left:1667px;top:949px;width:248px;height:1px;background:#cfcfcf"></div>
<svg style="left:1668px;top:284px" width="24" height="12"><path d="M1.2 1.5v9M3.6 2.5v7" stroke="#777" stroke-width="0.9"/><circle cx="14.4" cy="5.6" r="4.6" fill="#222"/><path d="M11.7 5.6h5.4" stroke="#fff" stroke-width="1.5"/></svg>
<svg style="left:1900px;top:286px" width="11" height="8"><path d="M0 0l5 4-5 4zM5 0l5 4-5 4z" fill="#222"/></svg>
<div class="a" style="left:1907px;top:303px;width:6px;height:605px;background:#a6a6a6;border-radius:3px"></div>
<svg style="left:1671px;top:313px" width="10" height="8"><path d="M0 0h9l-4.5 7z" fill="#333"/></svg>
<svg style="left:1671px;top:613px" width="10" height="8"><path d="M0 0h9l-4.5 7z" fill="#333"/></svg>
<div class="a" style="left:1832px;top:957px;width:72px;height:21px;background:#ebebeb;border:1px solid #b0b0b0"></div>
<div class="t" style="left:1691px;top:283.69px;font-size:11px;color:#666;transform:scaleX(0.89);transform-origin:0 0;">SKETCH PALETTE</div><div class="t" style="left:1684.3px;top:312.27px;font-size:11.5px;color:#333;font-weight:bold;transform:scaleX(0.97);transform-origin:0 0;">Options</div><div class="t" style="left:1684.6px;top:611.27px;font-size:11.5px;color:#333;font-weight:bold;">Constraints</div><div class="t" style="left:1835px;top:961.34px;font-size:12px;color:#555;">Stop Sketch</div><div class="t" style="left:1679.5px;top:342.39px;font-size:11px;color:#333;">Construction</div><svg style="left:1784px;top:339px" width="16" height="16" viewBox="0 0 16 16"><path d="M14 1L1 8l13 7" fill="none" stroke="#333" stroke-width="0.9"/><path d="M11 0v16M4 8h11" stroke="#f08a10" stroke-dasharray="2 1.5" stroke-width="1.1"/></svg><div class="t" style="left:1679.5px;top:372.39px;font-size:11px;color:#333;">Look At</div><svg style="left:1784px;top:369px" width="16" height="16" viewBox="0 0 16 16"><rect x="0.5" y="5.8" width="15.5" height="10.2" rx="1" fill="#fafafa" stroke="#3a4250" stroke-width="1.1"/><rect x="3.6" y="8.6" width="9.4" height="4.4" fill="#b8c0cc" stroke="#3a4250" stroke-width="1"/><path d="M2 5.6l4-4 1 2.6 4-1.2 1-1.4v4" fill="#f4f4f4" stroke="#3a4250" stroke-width="1"/></svg><div class="t" style="left:1679.5px;top:402.39px;font-size:11px;color:#333;">Sketch Grid</div><svg style="left:1784px;top:399px" width="16" height="16" viewBox="0 0 16 16"><rect x="1.5" y="1.5" width="12.5" height="12.5" rx="2.5" fill="url(#cbg)" stroke="#666"/><path d="M4.2 8l2.6 3.2L11.8 3.6" fill="none" stroke="#111" stroke-width="1.5"/></svg><div class="t" style="left:1679.5px;top:432.39px;font-size:11px;color:#333;">Snap</div><svg style="left:1784px;top:429px" width="16" height="16" viewBox="0 0 16 16"><rect x="1.5" y="1.5" width="12.5" height="12.5" rx="2.5" fill="url(#cbg)" stroke="#666"/><path d="M4.2 8l2.6 3.2L11.8 3.6" fill="none" stroke="#111" stroke-width="1.5"/></svg><div class="t" style="left:1679.5px;top:462.39px;font-size:11px;color:#333;">Slice</div><svg style="left:1784px;top:459px" width="16" height="16" viewBox="0 0 16 16"><rect x="1.5" y="1.5" width="12.5" height="12.5" rx="2.5" fill="url(#cbg)" stroke="#666"/></svg><div class="t" style="left:1679.5px;top:492.39px;font-size:11px;color:#333;">Show Profile</div><svg style="left:1784px;top:489px" width="16" height="16" viewBox="0 0 16 16"><rect x="1.5" y="1.5" width="12.5" height="12.5" rx="2.5" fill="url(#cbg)" stroke="#666"/><path d="M4.2 8l2.6 3.2L11.8 3.6" fill="none" stroke="#111" stroke-width="1.5"/></svg><div class="t" style="left:1679.5px;top:522.39px;font-size:11px;color:#333;">Show Points</div><svg style="left:1784px;top:519px" width="16" height="16" viewBox="0 0 16 16"><rect x="1.5" y="1.5" width="12.5" height="12.5" rx="2.5" fill="url(#cbg)" stroke="#666"/><path d="M4.2 8l2.6 3.2L11.8 3.6" fill="none" stroke="#111" stroke-width="1.5"/></svg><div class="t" style="left:1679.5px;top:552.39px;font-size:11px;color:#333;">Show Constraints</div><svg style="left:1784px;top:549px" width="16" height="16" viewBox="0 0 16 16"><rect x="1.5" y="1.5" width="12.5" height="12.5" rx="2.5" fill="url(#cbg)" stroke="#666"/><path d="M4.2 8l2.6 3.2L11.8 3.6" fill="none" stroke="#111" stroke-width="1.5"/></svg><div class="t" style="left:1679.5px;top:582.39px;font-size:11px;color:#333;">3D Sketch</div><svg style="left:1784px;top:579px" width="16" height="16" viewBox="0 0 16 16"><rect x="1.5" y="1.5" width="12.5" height="12.5" rx="2.5" fill="url(#cbg)" stroke="#666"/></svg><div class="t" style="left:1679.5px;top:641.29px;font-size:11px;color:#333;">Coincident</div><svg style="left:1784px;top:639px" width="16" height="16" viewBox="0 0 16 16"><path d="M3 1v10M3 14h12" stroke="#222"/><path d="M1.5 9l1.5 2 1.5-2" fill="#222"/><rect x="2" y="0" width="2" height="2" fill="#e02020"/><rect x="2" y="13" width="2" height="2" fill="#e02020"/></svg><div class="t" style="left:1679.5px;top:671.29px;font-size:11px;color:#333;">Collinear</div><svg style="left:1784px;top:669px" width="16" height="16" viewBox="0 0 16 16"><path d="M1 13L6 8M10 4l5-5" stroke="#222"/><path d="M9 11l6-6" stroke="#d0501a"/><path d="M3 5l4 4M5 9h2V7" fill="none" stroke="#222" stroke-width="0.8"/></svg><div class="t" style="left:1679.5px;top:701.29px;font-size:11px;color:#333;">Concentric</div><svg style="left:1784px;top:699px" width="16" height="16" viewBox="0 0 16 16"><circle cx="8" cy="8" r="6.8" fill="none" stroke="#d02020" stroke-width="1.3"/><circle cx="8" cy="8" r="4" fill="#e0e0e0" stroke="#444" stroke-width="1.2"/></svg><div class="t" style="left:1679.5px;top:731.29px;font-size:11px;color:#333;">Midpoint</div><svg style="left:1784px;top:729px" width="16" height="16" viewBox="0 0 16 16"><path d="M8 1.5l6.5 12.5h-13z" fill="none" stroke="#d02020" stroke-width="1.2"/></svg><div class="t" style="left:1679.5px;top:761.29px;font-size:11px;color:#333;">Fix/UnFix</div><svg style="left:1784px;top:759px" width="16" height="16" viewBox="0 0 16 16"><path d="M5 8V5a3 3 0 0 1 6 0v3" fill="none" stroke="#c0501a" stroke-width="1.3"/><rect x="3" y="7.5" width="10" height="8" rx="1" fill="#e07a40" stroke="#b04010"/><rect x="7" y="10" width="2" height="3" fill="#fff"/></svg><div class="t" style="left:1679.5px;top:791.29px;font-size:11px;color:#333;">Parallel</div><svg style="left:1784px;top:789px" width="16" height="16" viewBox="0 0 16 16"><path d="M2 12L12 2M5 15L15 5" stroke="#333" stroke-width="1"/><path d="M5 15L15 5" stroke="#d0501a" stroke-width="1.1"/></svg><div class="t" style="left:1679.5px;top:821.29px;font-size:11px;color:#333;">Perpendicular</div><svg style="left:1784px;top:819px" width="16" height="16" viewBox="0 0 16 16"><path d="M4 13L14 3" stroke="#333"/><path d="M2 9l5 5" stroke="#d0501a" stroke-width="1.1"/></svg><div class="t" style="left:1679.5px;top:851.29px;font-size:11px;color:#333;">Horizontal/Vertical</div><svg style="left:1784px;top:849px" width="16" height="16" viewBox="0 0 16 16"><path d="M6 0v12M9 0v12M4 12h8" stroke="#333"/><path d="M4 14h8M4 16l2-2M7 16l2-2M10 16l2-2" stroke="#d02020" stroke-width="1"/><path d="M5 3l2-2M5 6l2-2M5 9l2-2" stroke="#d02020" stroke-width="0.8"/></svg><div class="t" style="left:1679.5px;top:881.29px;font-size:11px;color:#333;">Tangent</div><svg style="left:1784px;top:879px" width="16" height="16" viewBox="0 0 16 16"><circle cx="7" cy="10" r="5" fill="none" stroke="#c0501a" stroke-width="1.2"/><path d="M6 1l10 10" stroke="#333"/></svg><div class="t" style="left:1679.5px;top:911.29px;font-size:11px;color:#333;">Curvature</div><svg style="left:1784px;top:909px" width="16" height="16" viewBox="0 0 16 16"><path d="M1 6c4-2 8 0 14 10" fill="none" stroke="#222" stroke-width="1.2"/><path d="M4 1l9 6" stroke="#d02020"/><rect x="7" y="5" width="4" height="4" fill="#e02020"/></svg><div class="a" style="left:1670px;top:936px;width:230px;height:13px;overflow:hidden"><div class="t" style="left:9px;top:5.29px;font-size:11px;color:#333;">Equal</div><svg style="left:114px;top:3px" width="16" height="16" viewBox="0 0 16 16"><path d="M2 4h12M2 9h12" stroke="#d02020" stroke-width="1.2"/></svg></div>
<div class="a" style="left:4px;top:961px;width:300px;height:25px;background:#f1f1f1;border:1px solid #d0d0d0"></div>
<svg style="left:9px;top:970px" width="11" height="8"><path d="M0 4l5-4v8zM5 4l5-4v8z" fill="#333"/></svg>
<svg style="left:282px;top:968px" width="22" height="12"><circle cx="5.5" cy="5.5" r="5" fill="#222"/><path d="M2.5 5.5h6M5.5 2.5v6" stroke="#fff" stroke-width="1.6"/><path d="M18.5 1v10M21 2v8" stroke="#888" stroke-width="0.8"/></svg>
<div class="t" style="left:29.25px;top:967.69px;font-size:11px;color:#5a5a5a;transform:scaleX(0.88);transform-origin:0 0;">COMMENTS</div>
<div class="a" style="left:833px;top:962px;width:253px;height:24px;background:#efefef"></div>
<svg style="left:833px;top:960px" width="255" height="28" viewBox="833 960 255 28">
 <defs><linearGradient id="lens" x1="0" y1="0" x2="0" y2="1"><stop offset="0" stop-color="#f4f8f8"/><stop offset="1" stop-color="#b8d0d4"/></linearGradient></defs>
 <path d="M845.5 967.5c-1-1-1.5-1.5-2.3-1.5-2 0-3.6 3.6-3.6 8s1.6 8 3.6 8c1.2 0 2.2-1.2 2.9-3" fill="none" stroke="#333" stroke-width="1.2"/>
 <path d="M838.5 970.5c-1.5 0.8-2.3 1.8-2.3 3 0 1.3 1 2.4 2.6 3.1" fill="none" stroke="#333" stroke-width="1.2"/>
 <path d="M842 976.5c1 0.2 2 0.3 3.2 0.3 4 0 6.8-1.5 6.8-3.3 0-1.2-1.2-2.2-3-2.8" fill="none" stroke="#333" stroke-width="1.2"/>
 <path d="M846 969.5h3M847.5 968v3M848.5 971.5h3M850 970v3" stroke="#333" stroke-width="1"/>
 <path d="M843.3 971.2l0.8 1.6 1.6 0.8-1.6 0.8-0.8 1.6-0.8-1.6-1.6-0.8 1.6-0.8z" fill="#1a7ae8"/>
 <path d="M857.2 972.2h5.6l-2.8 3.3z" fill="#333"/>
 <path d="M869.5 971.8h15v9.7h-15z" fill="#fafafa" stroke="#333" stroke-width="1.2"/>
 <rect x="872.6" y="974.6" width="9" height="4.1" fill="#b8c0cc" stroke="#333" stroke-width="1"/>
 <path d="M870.5 971.5l5.2-5 1 3.4 4.6-1 0.4-2v4.6" fill="#f4f4f4" stroke="#333" stroke-width="1"/>
 <path d="M899.8 981.5L896 975.8C895.3 974.7 896.4 973.8 897.4 974.6L899 976V968.6C899 967.3 901 967.3 901 968.6V973L901.6 966.9C901.7 965.6 903.8 965.6 903.7 966.9L903.9 973L904.9 967.4C905 966.1 907 966.2 906.9 967.5L906.6 973.6L908 969.9C908.4 968.7 910.4 969 910.2 970.3L909.2 976.5C908.8 979.5 907.5 981.5 905.5 981.5Z" fill="#eef0f2" stroke="#333" stroke-width="1"/>
 <circle cx="925.6" cy="972.6" r="4.3" fill="url(#lens)" stroke="#333" stroke-width="1.3"/>
 <path d="M928.8 975.8l4.6 4.4" stroke="#333" stroke-width="2.4" stroke-linecap="round"/>
 <path d="M934.2 968.5h3.6M936 966.7v3.6M934.2 972.2h3.6" stroke="#333" stroke-width="1"/>
 <rect x="947.5" y="966.5" width="15.3" height="15" fill="none" stroke="#333" stroke-width="1" stroke-dasharray="2 2"/>
 <rect x="945" y="966" width="0" height="0"/>
 <circle cx="953.3" cy="972.5" r="5.6" fill="url(#lens)" stroke="#333" stroke-width="1.4"/>
 <path d="M957.5 976.8l4 4" stroke="#333" stroke-width="2.6" stroke-linecap="round"/>
 <path d="M968 972h6l-3 3.5z" fill="#333"/>
 <rect x="988.5" y="966.5" width="15" height="12" rx="1.5" fill="#f4f4f4" stroke="#333" stroke-width="1"/>
 <rect x="990.6" y="968.4" width="10.8" height="7.8" rx="1" fill="#a4c0e4" stroke="#1e3a78" stroke-width="1"/>
 <path d="M993 978.5v2.6h7v-2.6" fill="#f4f4f4" stroke="#333" stroke-width="0.9"/>
 <path d="M1006 972h6l-3 3.5z" fill="#333"/>
 <rect x="1019.3" y="966.3" width="15.4" height="15.4" rx="1.5" fill="#7a7a7a" stroke="#444" stroke-width="0.8"/>
 <g fill="#fff"><rect x="1020.8" y="967.8" width="1.8" height="1.8"/><rect x="1023.8" y="967.8" width="1.8" height="1.8"/><rect x="1026.8" y="967.8" width="1.8" height="1.8"/><rect x="1029.8" y="967.8" width="1.8" height="1.8"/><rect x="1032.4" y="967.8" width="1.8" height="1.8"/>
 <rect x="1020.8" y="970.8" width="1.8" height="1.8"/><rect x="1023.8" y="970.8" width="1.8" height="1.8"/><rect x="1026.8" y="970.8" width="1.8" height="1.8"/><rect x="1029.8" y="970.8" width="1.8" height="1.8"/><rect x="1032.4" y="970.8" width="1.8" height="1.8"/>
 <rect x="1020.8" y="973.8" width="1.8" height="1.8" opacity="0.85"/><rect x="1023.8" y="973.8" width="1.8" height="1.8" opacity="0.85"/><rect x="1026.8" y="973.8" width="1.8" height="1.8" opacity="0.85"/><rect x="1029.8" y="973.8" width="1.8" height="1.8" opacity="0.85"/><rect x="1032.4" y="973.8" width="1.8" height="1.8" opacity="0.85"/>
 <rect x="1020.8" y="976.8" width="1.8" height="1.8" opacity="0.6"/><rect x="1023.8" y="976.8" width="1.8" height="1.8" opacity="0.6"/><rect x="1026.8" y="976.8" width="1.8" height="1.8" opacity="0.6"/><rect x="1029.8" y="976.8" width="1.8" height="1.8" opacity="0.6"/><rect x="1032.4" y="976.8" width="1.8" height="1.8" opacity="0.6"/>
 <rect x="1020.8" y="979.6" width="1.8" height="1.6" opacity="0.45"/><rect x="1023.8" y="979.6" width="1.8" height="1.6" opacity="0.45"/><rect x="1026.8" y="979.6" width="1.8" height="1.6" opacity="0.45"/><rect x="1029.8" y="979.6" width="1.8" height="1.6" opacity="0.45"/><rect x="1032.4" y="979.6" width="1.8" height="1.6" opacity="0.45"/></g>
 <path d="M1037 972h6l-3 3.5z" fill="#333"/>
 <g fill="#9ab8e0" stroke="#1e3a78" stroke-width="1.1"><rect x="1050.5" y="967.5" width="7" height="6" rx="1"/><rect x="1057.5" y="967.5" width="7" height="6" rx="1"/><rect x="1050.5" y="973.5" width="7" height="6" rx="1"/><rect x="1057.5" y="973.5" width="7" height="6" rx="1"/></g>
 <g fill="#c8d8ee"><rect x="1052.5" y="969.5" width="3" height="2"/><rect x="1059.5" y="969.5" width="3" height="2"/><rect x="1052.5" y="975.5" width="3" height="2"/><rect x="1059.5" y="975.5" width="3" height="2"/></g>
 <path d="M1068 972h6l-3 3.5z" fill="#333"/>
</svg>
<div class="a" style="left:124px;top:153px;width:160px;height:572px;background:#fff;border:1px solid #8a8a8a;border-radius:3px"></div><div class="a" style="left:129px;top:339px;width:147px;height:22px;background:#d9d9d9"></div><div class="a" style="left:129px;top:180px;width:150px;height:1px;background:#707070"></div><div class="a" style="left:129px;top:433px;width:150px;height:1px;background:#707070"></div><div class="a" style="left:129px;top:672px;width:150px;height:1px;background:#707070"></div><div class="a" style="left:129px;top:697px;width:150px;height:1px;background:#707070"></div><div class="t" style="left:149.3px;top:162.69px;font-size:11px;color:#333;transform:scaleX(0.95);transform-origin:0 0;">Create Sketch</div><svg style="left:129px;top:159.5px" width="17" height="17" viewBox="0 0 17 17"><rect x="0.5" y="1.5" width="13" height="13" fill="#e8ecf2" stroke="#444"/><path d="M2 4v9h8" fill="none" stroke="#4a6fb5"/><path d="M6 9l7-7 2 2-7 7-3 1z" fill="#f6d24a" stroke="#444" stroke-width="0.7"/><circle cx="13" cy="13" r="3.3" fill="#fff" stroke="#555"/><path d="M13 11v4M11 13h4" stroke="#555" stroke-width="1.2"/></svg><div class="t" style="left:149.3px;top:187.59px;font-size:11px;color:#333;transform:scaleX(0.95);transform-origin:0 0;">Line</div><div class="t" style="left:245px;top:187.59px;font-size:11px;color:#333;">L</div><svg style="left:129px;top:184.4px" width="17" height="17" viewBox="0 0 17 17"><path d="M2 11H10M10 3c4 0 6 2 6 4s-2 4-6 4" fill="none" stroke="#444" stroke-width="1"/><rect x="0" y="9.5" width="3" height="3" fill="#2a5ad8"/><rect x="9" y="9.5" width="3" height="3" fill="#2a5ad8"/><rect x="9" y="1.5" width="3" height="3" fill="#2a5ad8"/></svg><div class="t" style="left:149.3px;top:211.49px;font-size:11px;color:#333;transform:scaleX(0.95);transform-origin:0 0;">Rectangle</div><svg style="left:268px;top:211.3px" width="6" height="10"><path d="M0 0l5.5 5L0 10z" fill="#222"/></svg><div class="t" style="left:149.3px;top:233.39px;font-size:11px;color:#333;transform:scaleX(0.95);transform-origin:0 0;">Circle</div><svg style="left:268px;top:233.2px" width="6" height="10"><path d="M0 0l5.5 5L0 10z" fill="#222"/></svg><div class="t" style="left:149.3px;top:254.89px;font-size:11px;color:#333;transform:scaleX(0.95);transform-origin:0 0;">Arc</div><svg style="left:268px;top:254.7px" width="6" height="10"><path d="M0 0l5.5 5L0 10z" fill="#222"/></svg><div class="t" style="left:149.3px;top:277.49px;font-size:11px;color:#333;transform:scaleX(0.95);transform-origin:0 0;">Polygon</div><svg style="left:268px;top:277.3px" width="6" height="10"><path d="M0 0l5.5 5L0 10z" fill="#222"/></svg><div class="t" style="left:149.3px;top:299.89px;font-size:11px;color:#333;transform:scaleX(0.95);transform-origin:0 0;">Ellipse</div><svg style="left:129px;top:296.7px" width="17" height="17" viewBox="0 0 17 17"><ellipse cx="8" cy="8" rx="7.5" ry="4.5" fill="#e0e0e0" stroke="#444"/><path d="M8 6v4M6 8h4" stroke="#444" stroke-width="0.8"/><rect x="6.5" y="2.5" width="3" height="3" fill="#2a5ad8"/><rect x="14" y="6.5" width="3" height="3" fill="#2a5ad8"/></svg><div class="t" style="left:149.3px;top:322.69px;font-size:11px;color:#333;transform:scaleX(0.95);transform-origin:0 0;">Slot</div><svg style="left:268px;top:322.5px" width="6" height="10"><path d="M0 0l5.5 5L0 10z" fill="#222"/></svg><div class="t" style="left:149.3px;top:344.89px;font-size:11px;color:#333;transform:scaleX(0.95);transform-origin:0 0;">Spline</div><svg style="left:268px;top:344.7px" width="6" height="10"><path d="M0 0l5.5 5L0 10z" fill="#222"/></svg><div class="t" style="left:149.3px;top:367.69px;font-size:11px;color:#333;transform:scaleX(0.95);transform-origin:0 0;">Conic Curve</div><svg style="left:129px;top:364.5px" width="17" height="17" viewBox="0 0 17 17"><path d="M1.5 14c0-6 3-9 6.5-9s6.5 3 6.5 9" fill="none" stroke="#444"/><path d="M8 0v5M5.5 2.5h5" stroke="#444"/><rect x="0" y="12" width="3" height="3" fill="#2a5ad8"/><rect x="13" y="12" width="3" height="3" fill="#2a5ad8"/></svg><div class="t" style="left:149.3px;top:392.29px;font-size:11px;color:#333;transform:scaleX(0.95);transform-origin:0 0;">Point</div><svg style="left:129px;top:389.1px" width="17" height="17" viewBox="0 0 17 17"><path d="M8 0v16M0 8h16" stroke="#444" stroke-dasharray="3 2"/><rect x="6.5" y="6.5" width="3" height="3" fill="#2a5ad8"/></svg><div class="t" style="left:149.3px;top:415.69px;font-size:11px;color:#333;transform:scaleX(0.95);transform-origin:0 0;">Text</div><svg style="left:129px;top:412.5px" width="17" height="17" viewBox="0 0 17 17"><path d="M0.5 16L6.5 0h3l6 16h-3.2l-1.4-4H5.1l-1.4 4zM6 9.3h4L8 3.5z" fill="#333"/></svg><div class="t" style="left:149.3px;top:440.69px;font-size:11px;color:#333;transform:scaleX(0.95);transform-origin:0 0;">Fillet</div><svg style="left:129px;top:437.5px" width="17" height="17" viewBox="0 0 17 17"><path d="M1 15v-9c0-3 2-5 5-5h1" fill="none" stroke="#3a7ae8" stroke-width="1"/><path d="M9 1h7M1 9v7" stroke="#333"/><path d="M7 7v2M6 8h2" stroke="#333"/></svg><div class="t" style="left:149.3px;top:464.89px;font-size:11px;color:#333;transform:scaleX(0.95);transform-origin:0 0;">Trim</div><div class="t" style="left:245px;top:464.89px;font-size:11px;color:#333;">T</div><svg style="left:129px;top:461.7px" width="17" height="17" viewBox="0 0 17 17"><path d="M0 8h3M11 8h2M14 8h2" stroke="#444"/><path d="M4 14l6-12" stroke="#3a7ae8" stroke-width="1.1"/><path d="M6 8h2" stroke="#444"/></svg><div class="t" style="left:149.3px;top:488.69px;font-size:11px;color:#333;transform:scaleX(0.95);transform-origin:0 0;">Extend</div><svg style="left:129px;top:485.5px" width="17" height="17" viewBox="0 0 17 17"><path d="M0 8h3M5 8h2M8 8h1" stroke="#444"/><path d="M9 15l6-12" stroke="#3a7ae8" stroke-width="1.1"/></svg><div class="t" style="left:149.3px;top:512.59px;font-size:11px;color:#333;transform:scaleX(0.95);transform-origin:0 0;">Break</div><svg style="left:129px;top:509.4px" width="17" height="17" viewBox="0 0 17 17"><path d="M0 8h4M12 8h4" stroke="#666"/><path d="M8 3v10" stroke="#3a7ae8" stroke-width="1.1"/></svg><div class="t" style="left:149.3px;top:537.49px;font-size:11px;color:#333;transform:scaleX(0.95);transform-origin:0 0;">Sketch Scale</div><svg style="left:129px;top:534.3px" width="17" height="17" viewBox="0 0 17 17"><rect x="0.5" y="0.5" width="15" height="15" rx="1" fill="#8fb3dc" stroke="#3a4a6a"/><rect x="1" y="8" width="7" height="7" fill="#e8ecf2" stroke="#3a4a6a" stroke-width="0.6"/></svg><div class="t" style="left:149.3px;top:561.49px;font-size:11px;color:#333;transform:scaleX(0.95);transform-origin:0 0;">Offset</div><div class="t" style="left:245px;top:561.49px;font-size:11px;color:#333;">O</div><svg style="left:129px;top:558.3px" width="17" height="17" viewBox="0 0 17 17"><path d="M2 14h13v-3H9V3c0-2-4-2-4 0v8H2z" fill="none" stroke="#444" stroke-width="0.9"/><path d="M0.5 11v2c0 2 1 3 3 3h12.5" fill="none" stroke="#3a8ae8" stroke-width="1.1"/><path d="M3.5 11V2c0-2 2-2 3-2 2 0 4 1 4 3" fill="none" stroke="#3a8ae8"/></svg><div class="t" style="left:149.3px;top:585.39px;font-size:11px;color:#333;transform:scaleX(0.95);transform-origin:0 0;">Mirror</div><svg style="left:129px;top:582.2px" width="17" height="17" viewBox="0 0 17 17"><path d="M1 2c2-1 4 0 4 2v10H1z" fill="#fff" stroke="#444"/><path d="M15 2c-2-1-4 0-4 2v10h4z" fill="#8fb3dc" stroke="#3a4a6a"/><path d="M8 0v16" stroke="#444"/></svg><div class="t" style="left:149.3px;top:609.39px;font-size:11px;color:#333;transform:scaleX(0.95);transform-origin:0 0;">Circular Pattern</div><svg style="left:129px;top:606.2px" width="17" height="17" viewBox="0 0 17 17"><circle cx="8" cy="8" r="6" fill="none" stroke="#3a4a6a" stroke-width="0.8"/><g fill="#e8ecf2" stroke="#3a4a6a"><rect x="6" y="0.5" width="4" height="4" rx="1"/><rect x="12" y="6" width="4" height="4" rx="1"/><rect x="6" y="11.5" width="4" height="4" rx="1"/><rect x="0" y="6" width="4" height="4" rx="1"/></g></svg><div class="t" style="left:149.3px;top:633.29px;font-size:11px;color:#333;transform:scaleX(0.95);transform-origin:0 0;">Rectangular Pattern</div><svg style="left:129px;top:630.1px" width="17" height="17" viewBox="0 0 17 17"><path d="M4 2.5h8M2.5 4v8M4 13.5h8" stroke="#3a4a6a" stroke-dasharray="2 1"/><g fill="#e8ecf2" stroke="#3a4a6a"><rect x="0.5" y="0.5" width="4" height="4" rx="1"/><rect x="11.5" y="0.5" width="4" height="4" rx="1"/><rect x="0.5" y="11.5" width="4" height="4" rx="1"/><rect x="11.5" y="11.5" width="4" height="4" rx="1"/></g></svg><div class="t" style="left:149.3px;top:656.29px;font-size:11px;color:#333;transform:scaleX(0.95);transform-origin:0 0;">Project / Include</div><svg style="left:268px;top:656.1px" width="6" height="10"><path d="M0 0l5.5 5L0 10z" fill="#222"/></svg><div class="t" style="left:149.3px;top:680.49px;font-size:11px;color:#333;transform:scaleX(0.95);transform-origin:0 0;">Sketch Dimension</div><div class="t" style="left:245px;top:680.49px;font-size:11px;color:#333;">D</div><svg style="left:129px;top:677.3px" width="17" height="17" viewBox="0 0 17 17"><path d="M0.5 0v16M15.5 0v16M1 6h14" stroke="#333"/><path d="M1 6l3-2v4zM15 6l-3-2v4z" fill="#333"/></svg><div class="t" style="left:149.3px;top:704.69px;font-size:11px;color:#333;transform:scaleX(0.95);transform-origin:0 0;">Stop Sketch</div><svg style="left:129px;top:701.5px" width="17" height="17" viewBox="0 0 17 17"><path d="M0.5 8l7-7.5 8 4-5.5 8.5z" fill="#cdd2da" stroke="#444" stroke-width="0.8"/><path d="M6 12l3 3 7-7" fill="none" stroke="#4aa01a" stroke-width="2.4"/></svg><div class="a" style="left:277px;top:340px;width:147px;height:53px;background:#fff;border:1px solid #8a8a8a;border-radius:3px"></div><div class="a" style="left:281px;top:342px;width:138px;height:24px;background:#d9d9d9"></div><div class="t" style="left:301.25px;top:348.69px;font-size:11px;color:#333;transform:scaleX(0.93);transform-origin:0 0;">Fit Point Spline</div><div class="t" style="left:301.25px;top:372.69px;font-size:11px;color:#333;transform:scaleX(0.94);transform-origin:0 0;">Control Point Spline</div><svg style="left:406px;top:347px" width="4" height="14"><circle cx="2" cy="2" r="1.3" fill="#222"/><circle cx="2" cy="7" r="1.3" fill="#222"/><circle cx="2" cy="12" r="1.3" fill="#222"/></svg><svg style="left:281px;top:346px" width="17" height="17" viewBox="0 0 17 17"><path d="M1.5 13c0-3 1-5 3-5s3 2 5 1 3-1 3-6" fill="none" stroke="#555" stroke-width="1.1"/><rect x="0" y="11.5" width="3" height="3" fill="#2a5ad8"/><rect x="6" y="6.5" width="3" height="3" fill="#2a5ad8"/><rect x="12.5" y="1" width="3" height="3" fill="#2a5ad8"/></svg><svg style="left:281px;top:370px" width="17" height="17" viewBox="0 0 17 17"><path d="M1 14c1-3 3-3 5-3s3-3 4-5 3-3 5-4" fill="none" stroke="#555" stroke-width="1.1"/><g fill="#2a5ad8"><rect x="0" y="13" width="2.5" height="2.5"/><rect x="9" y="10.5" width="2.5" height="2.5"/><rect x="6.5" y="1.5" width="2.5" height="2.5"/><rect x="13.5" y="0" width="2.5" height="2.5"/><rect x="0" y="6" width="2.5" height="2.5"/><rect x="13.5" y="5.5" width="2.5" height="2.5"/></g></svg><div class="a" style="left:428px;top:346px;width:328px;height:94px;background:#505050;border-radius:8px"></div><div class="t" style="left:442px;top:372.04px;font-size:12px;color:#fff;font-weight:bold;transform:scaleX(0.986);transform-origin:0 0;">Creates a spline through the selected fit points.</div><div class="t" style="left:442px;top:398.34px;font-size:12px;color:#fff;font-weight:bold;transform:scaleX(0.986);transform-origin:0 0;">Select the first point to start the spline. Select</div><div class="t" style="left:442px;top:411.44px;font-size:12px;color:#fff;font-weight:bold;transform:scaleX(0.986);transform-origin:0 0;">additional points as fit points.</div><div class="a" style="left:0;top:990px;width:1920px;height:50px;background:#f1f1f1;border-top:2px solid #cfcfcf"></div><svg style="left:8px;top:1007px" width="120" height="18" viewBox="0 0 120 18">
<path d="M1.5 1v15" stroke="#444" stroke-width="2.5"/><path d="M15 1L4 8.5 15 16z" fill="#444"/>
<path d="M37 1L27 8.5 37 16z" fill="#444"/><path d="M39 5v7" stroke="#444" stroke-width="2"/>
<path d="M52 1l13 7.5L52 16z" fill="#444"/>
<path d="M77 5v7" stroke="#444" stroke-width="2"/><path d="M80 1l10 7.5L80 16z" fill="#444"/>
<path d="M103 1l11 7.5L103 16z" fill="#444"/><path d="M115.5 1v15" stroke="#444" stroke-width="2.5"/>
</svg><svg style="left:145px;top:1006px" width="18" height="18" viewBox="0 0 18 18"><defs><linearGradient id="tsk" x1="0" y1="0" x2="1" y2="1"><stop offset="0" stop-color="#fff"/><stop offset="1" stop-color="#b8d4f0"/></linearGradient></defs>
<rect x="1.2" y="1.2" width="15.4" height="15.4" fill="url(#tsk)" stroke="#000" stroke-width="2"/><path d="M3.8 4v8.8h9.2" fill="none" stroke="#111" stroke-width="1.3"/><path d="M3.5 13.2l1.4-3.2 8.5-8.5 2 2-8.5 8.5z" fill="#f6d020" stroke="#a07010" stroke-width="0.5"/><path d="M3.5 13.2l1.4-3.2 1.8 1.8z" fill="#222"/><path d="M4.9 10l1.8 1.8 1.2-1.2-1.8-1.8z" fill="#e89a50"/></svg><svg style="left:0;top:990px" width="1920" height="50" viewBox="0 990 1920 50"><g transform="translate(169,1006)"><path d="M1.5 4.5l3-3.5h6.5v12.5l-3 3h-6.5z" fill="#e8eef6" stroke="#c4ccd6" stroke-width="1"/><path d="M1.5 4.5h6.5v12M8 4.5l3-3.5" fill="none" stroke="#c4ccd6" stroke-width="0.9"/><path d="M14 15.5V1.5M12.3 4l1.7-2.6 1.7 2.6" fill="none" stroke="#c0c4c8" stroke-width="1"/></g><g transform="translate(193,1006)"><path d="M1.5 5l3.5-4h5v11.5l-3.5 4h-5z" fill="#eef0f2" stroke="#c4c8cc" stroke-width="1"/><path d="M6.5 5l3.5-4v11.5l-3.5 4z" fill="#d0e4cc" stroke="#b8d0b4" stroke-width="0.8"/><path d="M11.5 6.5l4.5-5v11l-4.5 4.5z" fill="#f4ddd0" stroke="#e8c4b0" stroke-width="0.8"/></g><g transform="translate(217,1006)"><path d="M1.5 5l3.5-3.5v12l-3.5 2.5z" fill="#eef0f4" stroke="#c4c8d0" stroke-width="0.9"/><path d="M15.5 6l-3.5-3.5v11l3.5 3z" fill="#e2eaf4" stroke="#c4ccd8" stroke-width="0.9"/><rect x="4.5" y="1" width="2.8" height="9" rx="1.4" fill="#eef0f4" stroke="#c4c8d0" stroke-width="0.8"/><rect x="9.5" y="6" width="2.8" height="9" rx="1.4" fill="#eef0f4" stroke="#c4c8d0" stroke-width="0.8"/><path d="M8.5 1v16" stroke="#c4c8d0" stroke-width="0.8"/></g><g transform="translate(241,1006)"><rect x="1" y="1" width="15" height="15" fill="#eef3f8" stroke="#b4b8bc" stroke-width="1.2"/><path d="M3.5 3.5v9h9" fill="none" stroke="#b4b8bc" stroke-width="1.1"/><path d="M4 12.5l1.2-2.8 7.6-7.6 1.7 1.7-7.6 7.6z" fill="#f6e8b0"/><path d="M4 12.5l1.2-2.8 1.6 1.6z" fill="#c8c0b0"/></g><g transform="translate(265,1006)"><path d="M1.5 4.5l3-3.5h6.5v12.5l-3 3h-6.5z" fill="#e8eef6" stroke="#c4ccd6" stroke-width="1"/><path d="M1.5 4.5h6.5v12M8 4.5l3-3.5" fill="none" stroke="#c4ccd6" stroke-width="0.9"/><path d="M14 15.5V1.5M12.3 4l1.7-2.6 1.7 2.6" fill="none" stroke="#c0c4c8" stroke-width="1"/></g><g transform="translate(289,1006)"><rect x="1" y="1" width="15" height="15" fill="#eef3f8" stroke="#b4b8bc" stroke-width="1.2"/><path d="M3.5 3.5v9h9" fill="none" stroke="#b4b8bc" stroke-width="1.1"/><path d="M4 12.5l1.2-2.8 7.6-7.6 1.7 1.7-7.6 7.6z" fill="#f6e8b0"/><path d="M4 12.5l1.2-2.8 1.6 1.6z" fill="#c8c0b0"/></g><g transform="translate(313,1006)"><path d="M1.5 4.5l3-3.5h6.5v12.5l-3 3h-6.5z" fill="#e8eef6" stroke="#c4ccd6" stroke-width="1"/><path d="M1.5 4.5h6.5v12M8 4.5l3-3.5" fill="none" stroke="#c4ccd6" stroke-width="0.9"/><path d="M14 15.5V1.5M12.3 4l1.7-2.6 1.7 2.6" fill="none" stroke="#c0c4c8" stroke-width="1"/></g><g transform="translate(337,1006)"><path d="M1.5 5l3.5-3.5v12l-3.5 2.5z" fill="#eef0f4" stroke="#c4c8d0" stroke-width="0.9"/><path d="M15.5 6l-3.5-3.5v11l3.5 3z" fill="#e2eaf4" stroke="#c4ccd8" stroke-width="0.9"/><rect x="4.5" y="1" width="2.8" height="9" rx="1.4" fill="#eef0f4" stroke="#c4c8d0" stroke-width="0.8"/><rect x="9.5" y="6" width="2.8" height="9" rx="1.4" fill="#eef0f4" stroke="#c4c8d0" stroke-width="0.8"/><path d="M8.5 1v16" stroke="#c4c8d0" stroke-width="0.8"/></g><g transform="translate(361,1006)"><rect x="1" y="1" width="15" height="15" fill="#eef3f8" stroke="#b4b8bc" stroke-width="1.2"/><path d="M3.5 3.5v9h9" fill="none" stroke="#b4b8bc" stroke-width="1.1"/><path d="M4 12.5l1.2-2.8 7.6-7.6 1.7 1.7-7.6 7.6z" fill="#f6e8b0"/><path d="M4 12.5l1.2-2.8 1.6 1.6z" fill="#c8c0b0"/></g><g transform="translate(385,1006)"><rect x="1" y="1" width="15" height="15" fill="#eef3f8" stroke="#b4b8bc" stroke-width="1.2"/><path d="M3.5 3.5v9h9" fill="none" stroke="#b4b8bc" stroke-width="1.1"/><path d="M4 12.5l1.2-2.8 7.6-7.6 1.7 1.7-7.6 7.6z" fill="#f6e8b0"/><path d="M4 12.5l1.2-2.8 1.6 1.6z" fill="#c8c0b0"/></g><g transform="translate(409,1006)"><path d="M1.5 4.5l3-3.5h6.5v12.5l-3 3h-6.5z" fill="#e8eef6" stroke="#c4ccd6" stroke-width="1"/><path d="M1.5 4.5h6.5v12M8 4.5l3-3.5" fill="none" stroke="#c4ccd6" stroke-width="0.9"/><path d="M14 15.5V1.5M12.3 4l1.7-2.6 1.7 2.6" fill="none" stroke="#c0c4c8" stroke-width="1"/></g><g transform="translate(433,1006)"><path d="M1.5 4.5l3-3.5h6.5v12.5l-3 3h-6.5z" fill="#e8eef6" stroke="#c4ccd6" stroke-width="1"/><path d="M1.5 4.5h6.5v12M8 4.5l3-3.5" fill="none" stroke="#c4ccd6" stroke-width="0.9"/><path d="M14 15.5V1.5M12.3 4l1.7-2.6 1.7 2.6" fill="none" stroke="#c0c4c8" stroke-width="1"/></g><g transform="translate(457,1006)"><rect x="1" y="1" width="15" height="15" fill="#eef3f8" stroke="#b4b8bc" stroke-width="1.2"/><path d="M3.5 3.5v9h9" fill="none" stroke="#b4b8bc" stroke-width="1.1"/><path d="M4 12.5l1.2-2.8 7.6-7.6 1.7 1.7-7.6 7.6z" fill="#f6e8b0"/><path d="M4 12.5l1.2-2.8 1.6 1.6z" fill="#c8c0b0"/></g><g transform="translate(481,1006)"><path d="M1.5 4.5l3-3.5h6.5v12.5l-3 3h-6.5z" fill="#e8eef6" stroke="#c4ccd6" stroke-width="1"/><path d="M1.5 4.5h6.5v12M8 4.5l3-3.5" fill="none" stroke="#c4ccd6" stroke-width="0.9"/><path d="M14 15.5V1.5M12.3 4l1.7-2.6 1.7 2.6" fill="none" stroke="#c0c4c8" stroke-width="1"/></g><g transform="translate(505,1006)"><rect x="1" y="1" width="15" height="15" fill="#eef3f8" stroke="#b4b8bc" stroke-width="1.2"/><path d="M3.5 3.5v9h9" fill="none" stroke="#b4b8bc" stroke-width="1.1"/><path d="M4 12.5l1.2-2.8 7.6-7.6 1.7 1.7-7.6 7.6z" fill="#f6e8b0"/><path d="M4 12.5l1.2-2.8 1.6 1.6z" fill="#c8c0b0"/></g><g transform="translate(529,1006)"><rect x="1" y="1" width="15" height="15" fill="#eef3f8" stroke="#b4b8bc" stroke-width="1.2"/><path d="M3.5 3.5v9h9" fill="none" stroke="#b4b8bc" stroke-width="1.1"/><path d="M4 12.5l1.2-2.8 7.6-7.6 1.7 1.7-7.6 7.6z" fill="#f6e8b0"/><path d="M4 12.5l1.2-2.8 1.6 1.6z" fill="#c8c0b0"/></g><g transform="translate(553,1006)"><path d="M1.5 4.5l3-3.5h6.5v12.5l-3 3h-6.5z" fill="#e8eef6" stroke="#c4ccd6" stroke-width="1"/><path d="M1.5 4.5h6.5v12M8 4.5l3-3.5" fill="none" stroke="#c4ccd6" stroke-width="0.9"/><path d="M14 15.5V1.5M12.3 4l1.7-2.6 1.7 2.6" fill="none" stroke="#c0c4c8" stroke-width="1"/></g><g transform="translate(577,1006)"><rect x="1" y="1" width="15" height="15" fill="#eef3f8" stroke="#b4b8bc" stroke-width="1.2"/><path d="M3.5 3.5v9h9" fill="none" stroke="#b4b8bc" stroke-width="1.1"/><path d="M4 12.5l1.2-2.8 7.6-7.6 1.7 1.7-7.6 7.6z" fill="#f6e8b0"/><path d="M4 12.5l1.2-2.8 1.6 1.6z" fill="#c8c0b0"/></g><g transform="translate(601,1006)"><path d="M1.5 4.5l3-3.5h6.5v12.5l-3 3h-6.5z" fill="#e8eef6" stroke="#c4ccd6" stroke-width="1"/><path d="M1.5 4.5h6.5v12M8 4.5l3-3.5" fill="none" stroke="#c4ccd6" stroke-width="0.9"/><path d="M14 15.5V1.5M12.3 4l1.7-2.6 1.7 2.6" fill="none" stroke="#c0c4c8" stroke-width="1"/></g><g transform="translate(625,1006)"><rect x="1" y="1" width="15" height="15" fill="#eef3f8" stroke="#b4b8bc" stroke-width="1.2"/><path d="M3.5 3.5v9h9" fill="none" stroke="#b4b8bc" stroke-width="1.1"/><path d="M4 12.5l1.2-2.8 7.6-7.6 1.7 1.7-7.6 7.6z" fill="#f6e8b0"/><path d="M4 12.5l1.2-2.8 1.6 1.6z" fill="#c8c0b0"/></g><g transform="translate(649,1006)"><path d="M1.5 4.5l3-3.5h6.5v12.5l-3 3h-6.5z" fill="#e8eef6" stroke="#c4ccd6" stroke-width="1"/><path d="M1.5 4.5h6.5v12M8 4.5l3-3.5" fill="none" stroke="#c4ccd6" stroke-width="0.9"/><path d="M14 15.5V1.5M12.3 4l1.7-2.6 1.7 2.6" fill="none" stroke="#c0c4c8" stroke-width="1"/></g><g transform="translate(673,1006)"><rect x="1" y="1" width="15" height="15" fill="#eef3f8" stroke="#b4b8bc" stroke-width="1.2"/><path d="M3.5 3.5v9h9" fill="none" stroke="#b4b8bc" stroke-width="1.1"/><path d="M4 12.5l1.2-2.8 7.6-7.6 1.7 1.7-7.6 7.6z" fill="#f6e8b0"/><path d="M4 12.5l1.2-2.8 1.6 1.6z" fill="#c8c0b0"/></g><g transform="translate(697,1006)"><rect x="1" y="1" width="15" height="15" fill="#eef3f8" stroke="#b4b8bc" stroke-width="1.2"/><path d="M3.5 3.5v9h9" fill="none" stroke="#b4b8bc" stroke-width="1.1"/><path d="M4 12.5l1.2-2.8 7.6-7.6 1.7 1.7-7.6 7.6z" fill="#f6e8b0"/><path d="M4 12.5l1.2-2.8 1.6 1.6z" fill="#c8c0b0"/></g><g transform="translate(721,1006)"><rect x="1" y="1" width="15" height="15" fill="#eef3f8" stroke="#b4b8bc" stroke-width="1.2"/><path d="M3.5 3.5v9h9" fill="none" stroke="#b4b8bc" stroke-width="1.1"/><path d="M4 12.5l1.2-2.8 7.6-7.6 1.7 1.7-7.6 7.6z" fill="#f6e8b0"/><path d="M4 12.5l1.2-2.8 1.6 1.6z" fill="#c8c0b0"/></g><g transform="translate(745,1006)"><path d="M1.5 5l3.5-4h5v11.5l-3.5 4h-5z" fill="#eef0f2" stroke="#c4c8cc" stroke-width="1"/><path d="M6.5 5l3.5-4v11.5l-3.5 4z" fill="#d0e4cc" stroke="#b8d0b4" stroke-width="0.8"/><path d="M11.5 6.5l4.5-5v11l-4.5 4.5z" fill="#f4ddd0" stroke="#e8c4b0" stroke-width="0.8"/></g><path d="M153.5 1032H755.5" stroke="#c8c8c8" stroke-width="2"/><path d="M154.5 1026v6M178.5 1026v6M202.5 1026v6M226.5 1026v6M250.5 1026v6M274.5 1026v6M298.5 1026v6M322.5 1026v6M346.5 1026v6M370.5 1026v6M394.5 1026v6M418.5 1026v6M442.5 1026v6M466.5 1026v6M490.5 1026v6M514.5 1026v6M538.5 1026v6M562.5 1026v6M586.5 1026v6M610.5 1026v6M634.5 1026v6M658.5 1026v6M682.5 1026v6M706.5 1026v6M730.5 1026v6M754.5 1026v6" stroke="#c8c8c8" stroke-width="2"/><path d="M760 1002h12v4l-5 4h-2l-5-4z" fill="#555"/><path d="M766 1005v28" stroke="#555" stroke-width="2.2"/></svg><svg style="left:1890px;top:1007px" width="18" height="18" viewBox="0 0 18 18"><circle cx="9" cy="9" r="6" fill="none" stroke="#444" stroke-width="3.4" stroke-dasharray="2.6 2"/><circle cx="9" cy="9" r="4.6" fill="none" stroke="#444" stroke-width="2.4"/></svg>
<div class="a" style="left:0;top:1040px;width:1920px;height:40px;background:linear-gradient(90deg,#121212 0%,#111 20%,#0e0e0e 38%,#121212 55%,#161616 70%,#1e1e1e 80%,#222 83%,#1a1a1a 90%,#151515 100%)"></div>
<svg style="left:15px;top:1051px" width="17" height="17" viewBox="0 0 17 17" fill="#fff"><path d="M0 2.3l7-1v7H0zM8 1.2L17 0v8.3H8zM0 9h7v7l-7-1zM8 9h9v8l-9-1.2z"/></svg>
<svg style="left:62px;top:1050px" width="20" height="20" viewBox="0 0 20 20"><circle cx="12" cy="8" r="6" fill="none" stroke="#fff" stroke-width="1.5"/><path d="M7.7 12.3L1 19" stroke="#fff" stroke-width="1.8"/></svg>
<svg style="left:110px;top:1050px" width="20" height="20" viewBox="0 0 20 20" fill="none" stroke="#fff" stroke-width="1.4"><rect x="3" y="5" width="11" height="9"/><path d="M1 2h14M1 17h14M17 5v9"/></svg>
<div class="a" style="left:151px;top:1041px;width:40px;height:39px;background:transparent"></div>
<svg style="left:158.8px;top:1047.8px" width="24" height="24" viewBox="1 1 24 24">
 <circle cx="13" cy="13" r="11.2" fill="#db4437"/>
 <path d="M13 13L3.3 7.4A11.2 11.2 0 0 1 22.7 7.4z" fill="#db4437"/>
 <path d="M13 13l9.7-5.6A11.2 11.2 0 0 1 13 24.2z" fill="#f4c20d"/>
 <path d="M13 13v11.2A11.2 11.2 0 0 1 3.3 7.4z" fill="#0f9d58"/>
 <circle cx="13" cy="13" r="5.2" fill="#fff"/><circle cx="13" cy="13" r="4" fill="#4285f4"/>
</svg>
<div class="a" style="left:151px;top:1078px;width:40px;height:2px;background:#76b9ed"></div>
<svg style="left:200px;top:1045px" width="140" height="30" viewBox="200 1045 140 30">
<path d="M209 1053.5v-2.3c0-0.6 0.4-0.9 0.9-0.9h5.2l1.5 1.7h13c0.5 0 0.9 0.4 0.9 0.9v16.2c0 0.5-0.4 0.9-0.9 0.9h-19.7c-0.5 0-0.9-0.4-0.9-0.9z" fill="#f8d775"/>
<path d="M209 1054h21.5v14.9c0 0.5-0.4 0.9-0.9 0.9h-19.7c-0.5 0-0.9-0.4-0.9-0.9z" fill="#fde59b"/>
<path d="M210 1051.8h4.5" stroke="#fff" stroke-width="1" opacity="0.8"/>
<path d="M213.3 1069.8v-6.3c0-1 0.8-1.6 1.6-1.6h9.4c1 0 1.6 0.7 1.6 1.6v6.3h-3.4v-3.8h-5.8v3.8z" fill="#29a3e8"/>
<path d="M256.8 1055.2l12.1-5.6 12.1 5.6v13.9h-24.2z" fill="#fff"/>
<path d="M257.3 1056.3l22.8-1.2-12.4 3.4 7.8 6.9-10.2-6.5z" fill="#111"/>
<path d="M306.5 1054.2h22.3v15.6c0 0.7-0.6 1.3-1.3 1.3h-19.7c-0.7 0-1.3-0.6-1.3-1.3z" fill="#fff"/>
<path d="M313.5 1054.2v-1.7c0-2.3 1.9-4.3 4.2-4.3s4.2 2 4.2 4.3v1.7" fill="none" stroke="#fff" stroke-width="1.3"/>
<rect x="311.5" y="1057" width="5.5" height="5.5" fill="#f25022"/><rect x="317.9" y="1057" width="5.5" height="5.5" fill="#7fba00"/><rect x="311.5" y="1063.4" width="5.5" height="5.5" fill="#00a4ef"/><rect x="317.9" y="1063.4" width="5.5" height="5.5" fill="#ffb900"/>
</svg>
<div class="a" style="left:200px;top:1078px;width:31px;height:2px;background:#76b9ed"></div><div class="a" style="left:231px;top:1078px;width:9px;height:2px;background:#5a8cb8"></div>
<div class="a" style="left:343px;top:1040px;width:48px;height:40px;background:#3a3a3a"></div>
<div class="a" style="left:343px;top:1078px;width:48px;height:2px;background:#76b9ed"></div>
<svg style="left:355px;top:1048px" width="24" height="24" viewBox="0 0 24 24"><defs><linearGradient id="fbg" x1="0" y1="0" x2="1" y2="1"><stop offset="0" stop-color="#f8d8bc"/><stop offset="1" stop-color="#fbe8d8"/></linearGradient><linearGradient id="ff" x1="0" y1="0" x2="1" y2="0"><stop offset="0" stop-color="#c8641c"/><stop offset="0.5" stop-color="#f0a040"/><stop offset="1" stop-color="#e88a2a"/></linearGradient></defs>
<rect x="0" y="0" width="24" height="24" fill="url(#fbg)"/><path d="M8 4.5c0-1 1-2 2-2h7.5l-1 3.5H11.5v3.5h4.5l-1 3.5h-3.5v6.5l-3.5 2.5z" fill="url(#ff)"/><text x="15.5" y="21" font-size="3.6" fill="#d89a68" font-family="Liberation Sans">360</text></svg>
<svg style="left:1636px;top:1050px" width="20" height="20" viewBox="0 0 20 20" fill="none" stroke="#fff" stroke-width="1.2"><circle cx="13" cy="5" r="3.2"/><path d="M7 13c0-4 3-5 6-5s6 1 6 5"/><circle cx="6" cy="10" r="3.2"/><path d="M0.5 19c0-4 2.5-5.5 5.5-5.5s5.5 1.5 5.5 5.5"/></svg>
<svg style="left:1675px;top:1055px" width="14" height="9"><path d="M1 8l6-6 6 6" fill="none" stroke="#fff" stroke-width="1.5"/></svg>
<svg style="left:1697px;top:1053px" width="20" height="12" viewBox="0 0 20 12"><path d="M4 12a4 4 0 0 1 0-8 6 6 0 0 1 11-1 4.5 4.5 0 0 1 1 9z" fill="#fff"/></svg>
<svg style="left:1724px;top:1052px" width="16" height="16" viewBox="0 0 16 16" fill="none" stroke="#fff" stroke-width="1.3"><path d="M1 8a11 11 0 0 1 14-6M3 11a8 8 0 0 1 12-5M6 14a5 5 0 0 1 9-4"/><circle cx="13" cy="14" r="1.5" fill="#fff"/></svg>
<svg style="left:1745px;top:1051px" width="18" height="17" viewBox="0 0 18 17" fill="none" stroke="#fff" stroke-width="1.2"><path d="M1 6h3l4-4v13l-4-4H1z"/><path d="M11 5c1.5 1.5 1.5 5.5 0 7M13.5 3c2.5 2.5 2.5 9 0 11M16 1c3.5 4 3.5 11 0 15" stroke-width="1"/></svg>
<div class="t" style="left:1772px;top:1053.6px;font-size:12px;color:#fff;transform:scaleX(0.87);transform-origin:0 0">ENG</div>
<div class="t" style="left:1812px;top:1045px;font-size:12px;color:#fff">4:11 AM</div>
<div class="t" style="left:1807px;top:1063px;font-size:12px;color:#fff">12-Mar-19</div>
<svg style="left:1877px;top:1049px" width="28" height="28" viewBox="0 0 28 28"><path d="M1 1h16v11h-9l-3 3v-3H1z" fill="#fff"/><path d="M4 4h10M4 6.5h10M4 9h8" stroke="#111" stroke-width="1"/><circle cx="16" cy="18" r="7.5" fill="#111" stroke="#888"/><text x="16" y="22.5" font-size="12" font-weight="bold" fill="#fff" text-anchor="middle" font-family="Liberation Sans">1</text></svg>
<div class="a" style="left:1915px;top:1040px;width:1px;height:40px;background:#555"></div>

</body></html>
